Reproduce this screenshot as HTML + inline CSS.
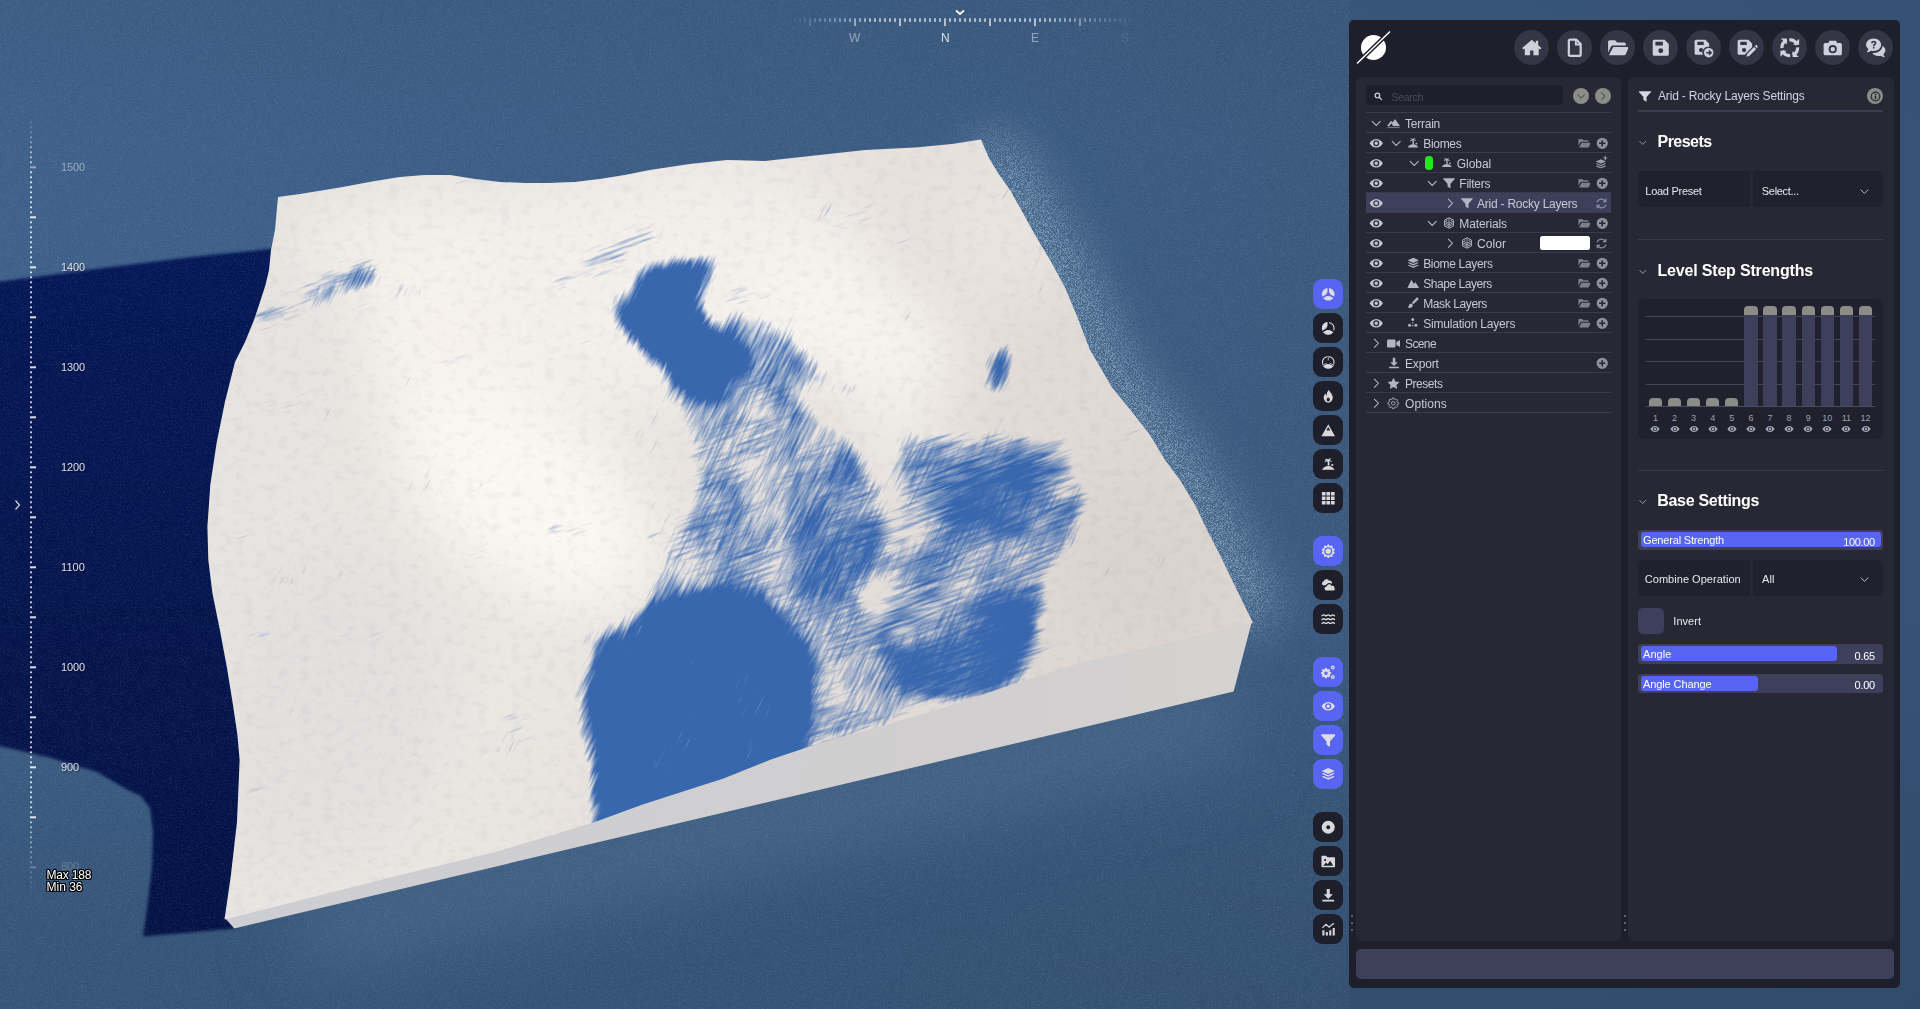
<!DOCTYPE html>
<html><head><meta charset="utf-8"><title>Terrain</title>
<style>
html,body{margin:0;padding:0;}
body{width:1920px;height:1009px;overflow:hidden;position:relative;background:#3e5f8c;font-family:"Liberation Sans",sans-serif;}
#scene{position:absolute;left:0;top:0;}
#ui{position:absolute;left:0;top:0;width:1920px;height:1009px;}
#ui svg{overflow:visible}
</style></head><body>
<svg id="scene" width="1920" height="1009" viewBox="0 0 1920 1009">
<defs>
<linearGradient id="bg1" x1="0" y1="0" x2="1" y2="0">
<stop offset="0" stop-color="#3e5f88"/><stop offset="0.35" stop-color="#3c5c84"/><stop offset="0.7" stop-color="#3a587c"/><stop offset="1" stop-color="#365276"/>
</linearGradient>
<linearGradient id="bgv" x1="0" y1="0" x2="0" y2="1">
<stop offset="0" stop-color="#2a4560" stop-opacity="0.12"/><stop offset="0.15" stop-color="#2a4560" stop-opacity="0"/><stop offset="0.6" stop-color="#2a4560" stop-opacity="0"/><stop offset="0.9" stop-color="#2a4560" stop-opacity="0.4"/><stop offset="1" stop-color="#2a4560" stop-opacity="0.45"/>
</linearGradient>
<linearGradient id="shg" x1="0" y1="0" x2="0" y2="1"><stop offset="0" stop-color="#041654"/><stop offset="1" stop-color="#031143"/></linearGradient>
<linearGradient id="topg" x1="0" y1="0" x2="1" y2="0.3"><stop offset="0" stop-color="#e6e2df"/><stop offset="0.45" stop-color="#ebe7e3"/><stop offset="1" stop-color="#ddd6d2"/></linearGradient>
<linearGradient id="sideg" x1="0" y1="0" x2="1" y2="0"><stop offset="0" stop-color="#cdced3"/><stop offset="0.7" stop-color="#d0cecf"/><stop offset="1" stop-color="#d5d2d1"/></linearGradient>
<clipPath id="topclip"><polygon points="278,197 300,194 340,187.5 375,181 400,177 425,175 450,175 475,179 500,182 525,183 550,183 575,182 600,179 625,175 650,170 690,164 727,160 765,161 815,155.5 865,150 915,147.5 952,144 981,139.5 988.75,157.5 997.5,172.5 1010,190 1022.5,212.5 1035,235 1050,260 1065,287.5 1077.5,317.5 1090,350 1097.5,362.5 1112,387.5 1132,412 1150,435 1165,460 1180,480 1195,505 1207,530 1220,555 1232,580 1253,623 1151.6,647 1085.6,661.3 1020,682 949,706 884,725.6 820,743 771,759.5 723,778.8 642,804.7 593.7,822.4 497,851.5 400,875 224.5,919.6 230.8,876 237,822 239.7,760 237.4,734.5 232.4,701 227,668 220,630.5 212.4,593 208.3,560 207.4,526.5 210.3,485 216.6,443 225,401.6 235,362 245,342 254,320 260,302 265.5,285 269,270 271,250 275,230"/></clipPath>
<filter id="b2" color-interpolation-filters="sRGB" filterUnits="userSpaceOnUse" x="-50" y="200" width="500" height="800"><feGaussianBlur stdDeviation="1.6"/></filter>
<filter id="b20" color-interpolation-filters="sRGB" filterUnits="userSpaceOnUse" x="0" y="0" width="1920" height="1009"><feGaussianBlur stdDeviation="30"/></filter>
<filter id="b40" color-interpolation-filters="sRGB" filterUnits="userSpaceOnUse" x="0" y="0" width="1920" height="1009"><feGaussianBlur stdDeviation="38"/></filter>
<filter id="halo" filterUnits="userSpaceOnUse" x="900" y="60" width="480" height="720" color-interpolation-filters="sRGB">
<feGaussianBlur in="SourceAlpha" stdDeviation="24" result="a"/>
<feTurbulence type="fractalNoise" baseFrequency="1.4" numOctaves="2" seed="3" result="t"/>
<feColorMatrix in="t" type="matrix" values="0 0 0 0 0  0 0 0 0 0  0 0 0 0 0  4 0 0 0 -1.7" result="n"/>
<feComposite in="a" in2="n" operator="arithmetic" k1="0.85" k2="0.16" k3="0" k4="0" result="m"/>
<feFlood flood-color="#9fc0d4" result="f"/>
<feComposite in="f" in2="m" operator="in"/>
</filter>
<filter id="relief" filterUnits="userSpaceOnUse" x="200" y="130" width="1060" height="800" color-interpolation-filters="sRGB">
<feTurbulence type="fractalNoise" baseFrequency="0.09 0.13" numOctaves="3" seed="17" result="t"/>
<feColorMatrix in="t" type="matrix" values="0 0 0 0 0.5  0 0 0 0 0.53  0 0 0 0 0.66  2.4 0 0 0 -1.22"/>
</filter>
<filter id="grain" filterUnits="userSpaceOnUse" x="0" y="0" width="1350" height="1009" color-interpolation-filters="sRGB">
<feTurbulence type="fractalNoise" baseFrequency="1.3" numOctaves="2" seed="5" result="t"/>
<feColorMatrix in="t" type="matrix" values="0 0 0 0 0.75  0 0 0 0 0.85  0 0 0 0 1  0 3 0 0 -1.35"/>
</filter>
<filter id="streak" filterUnits="userSpaceOnUse" x="-200" y="-200" width="1900" height="1500" color-interpolation-filters="sRGB">
<feGaussianBlur in="SourceAlpha" stdDeviation="8" result="a"/>
<feTurbulence type="fractalNoise" baseFrequency="0.035 0.4" numOctaves="3" seed="7" result="t"/>
<feColorMatrix in="t" type="matrix" values="0 0 0 0 0  0 0 0 0 0  0 0 0 0 0  1 0 0 0 0" result="n"/>
<feTurbulence type="fractalNoise" baseFrequency="0.014 0.022" numOctaves="3" seed="11" result="t2"/>
<feColorMatrix in="t2" type="matrix" values="0 0 0 0 0  0 0 0 0 0  0 0 0 0 0  0 1 0 0 0" result="n2"/>
<feComposite in="n" in2="n2" operator="arithmetic" k1="0" k2="0.55" k3="0.7" k4="-0.125" result="nn"/>
<feComposite in="a" in2="nn" operator="arithmetic" k1="0" k2="1" k3="1.04" k4="-0.52" result="m"/>
<feComponentTransfer in="m" result="m2"><feFuncA type="linear" slope="2.4" intercept="-0.7"/></feComponentTransfer>
<feFlood flood-color="#3967ae" result="f"/>
<feComposite in="f" in2="m2" operator="in"/>
</filter>
<filter id="streak2" filterUnits="userSpaceOnUse" x="-200" y="-200" width="1900" height="1500" color-interpolation-filters="sRGB">
<feGaussianBlur in="SourceAlpha" stdDeviation="8" result="a"/>
<feTurbulence type="fractalNoise" baseFrequency="0.03 0.36" numOctaves="3" seed="23" result="t"/>
<feColorMatrix in="t" type="matrix" values="0 0 0 0 0  0 0 0 0 0  0 0 0 0 0  1 0 0 0 0" result="n"/>
<feTurbulence type="fractalNoise" baseFrequency="0.012 0.02" numOctaves="3" seed="31" result="t2"/>
<feColorMatrix in="t2" type="matrix" values="0 0 0 0 0  0 0 0 0 0  0 0 0 0 0  0 1 0 0 0" result="n2"/>
<feComposite in="n" in2="n2" operator="arithmetic" k1="0" k2="0.55" k3="0.7" k4="-0.125" result="nn"/>
<feComposite in="a" in2="nn" operator="arithmetic" k1="0" k2="1" k3="1.04" k4="-0.52" result="m"/>
<feComponentTransfer in="m" result="m2"><feFuncA type="linear" slope="2.4" intercept="-0.7"/></feComponentTransfer>
<feFlood flood-color="#3967ae" result="f"/>
<feComposite in="f" in2="m2" operator="in"/>
</filter>
</defs>
<rect width="1920" height="1009" fill="url(#bg1)"/>
<rect width="1920" height="1009" fill="url(#bgv)"/>
<path d="M300,935 L1240,712" stroke="#4d6c8c" stroke-opacity="0.75" stroke-width="70" fill="none" filter="url(#b40)"/>
<polygon points="-10,283 100,268.5 200,256 280,248 400,500 300,900 234.3,928.5 143,936.5 148,902 152,867 153,831 150,808 141,796 126,789 97,772 48,757 -10,744" fill="url(#shg)" filter="url(#b2)"/>
<g filter="url(#halo)"><polyline points="981,139.5 988.75,157.5 997.5,172.5 1010,190 1022.5,212.5 1035,235 1050,260 1065,287.5 1077.5,317.5 1090,350 1097.5,362.5 1112,387.5 1132,412 1150,435 1165,460 1180,480 1195,505 1207,530 1220,555 1232,580 1253,623" fill="none" stroke="#000" stroke-width="44" transform="translate(6,2)"/></g>
<rect width="1350" height="1009" filter="url(#grain)" opacity="0.1"/>
<polygon points="1252,621 1151.6,645 1085.6,659.3 1020,680 949,704 884,723.6 820,741 771,757.5 723,776.8 642,802.7 593.7,820.4 497,849.5 400,873 224.5,917.6 234.3,928.5 1233.6,691.6" fill="url(#sideg)"/>
<polygon points="278,197 300,194 340,187.5 375,181 400,177 425,175 450,175 475,179 500,182 525,183 550,183 575,182 600,179 625,175 650,170 690,164 727,160 765,161 815,155.5 865,150 915,147.5 952,144 981,139.5 988.75,157.5 997.5,172.5 1010,190 1022.5,212.5 1035,235 1050,260 1065,287.5 1077.5,317.5 1090,350 1097.5,362.5 1112,387.5 1132,412 1150,435 1165,460 1180,480 1195,505 1207,530 1220,555 1232,580 1253,623 1151.6,647 1085.6,661.3 1020,682 949,706 884,725.6 820,743 771,759.5 723,778.8 642,804.7 593.7,822.4 497,851.5 400,875 224.5,919.6 230.8,876 237,822 239.7,760 237.4,734.5 232.4,701 227,668 220,630.5 212.4,593 208.3,560 207.4,526.5 210.3,485 216.6,443 225,401.6 235,362 245,342 254,320 260,302 265.5,285 269,270 271,250 275,230" fill="url(#topg)"/>
<g clip-path="url(#topclip)"><g filter="url(#b20)">
<ellipse cx="525" cy="495" rx="150" ry="85" fill="#fefbf4" fill-opacity="0.8" transform="rotate(38 525 495)"/>
<ellipse cx="440" cy="370" rx="70" ry="110" fill="#fbf8f1" fill-opacity="0.6" transform="rotate(-25 440 370)"/>
<ellipse cx="400" cy="240" rx="110" ry="45" fill="#faf7f1" fill-opacity="0.55" transform="rotate(-8 400 240)"/>
<ellipse cx="620" cy="290" rx="260" ry="110" fill="#f5f2ed" fill-opacity="0.75" transform="rotate(-8 620 290)"/>
<ellipse cx="850" cy="330" rx="115" ry="60" fill="#f8f5f0" fill-opacity="0.9" transform="rotate(25 850 330)"/>
<ellipse cx="900" cy="440" rx="50" ry="35" fill="#f4f1ec" fill-opacity="0.7" transform="rotate(25 900 440)"/>
<ellipse cx="1140" cy="570" rx="90" ry="70" fill="#d8d0cc" fill-opacity="0.5" transform="rotate(50 1140 570)"/>
<ellipse cx="1000" cy="235" rx="70" ry="75" fill="#ede8e5" fill-opacity="0.6"/>
<ellipse cx="330" cy="720" rx="110" ry="160" fill="#dcd9dc" fill-opacity="0.45" transform="rotate(10 330 720)"/>
<ellipse cx="400" cy="840" rx="150" ry="40" fill="#e9e5e2" fill-opacity="0.4" transform="rotate(-14 400 840)"/>
</g></g>
<g clip-path="url(#topclip)"><rect x="200" y="130" width="1060" height="800" filter="url(#relief)" opacity="0.1"/></g>
<g clip-path="url(#topclip)"><g transform="rotate(-20 700 500)"><g filter="url(#streak2)"><g transform="rotate(20 700 500)">
<polygon points="890,440 940,430 1000,432 1060,450 1085,480 1075,530 1050,570 1040,615 1025,675 950,703 900,690 880,640 890,560 900,500" fill="#000" fill-opacity="0.46" />
<polygon points="663,374 767,360 800,400 850,440 884,490 890,560 860,600 800,600 760,600 700,595 651,600 681,527 694,478 681,404" fill="#000" fill-opacity="0.29" />
<polygon points="775,600 860,600 900,650 1030,600 1040,620 1020,680 950,705 885,725 820,743 775,757 790,700" fill="#000" fill-opacity="0.37" />
<ellipse cx="1000" cy="505" rx="60" ry="38" fill="#000" fill-opacity="0.35" transform="rotate(-20 1000 505)"/>
<ellipse cx="840" cy="545" rx="50" ry="48" fill="#000" fill-opacity="0.35"/>
<ellipse cx="960" cy="640" rx="70" ry="40" fill="#000" fill-opacity="0.12" transform="rotate(-20 960 640)"/>
<path d="M255,320 L372,262" stroke="#000" stroke-opacity="0.45" stroke-width="18" fill="none"/>
<path d="M550,282 L665,228" stroke="#000" stroke-opacity="0.48" stroke-width="16" fill="none"/>
</g></g></g></g>
<g clip-path="url(#topclip)"><g transform="rotate(-64 700 500)"><g filter="url(#streak)"><g transform="rotate(64 700 500)">
<polygon points="614,312 632,292 642,270 672,262 705,257 718,264 708,285 700,303 715,322 735,340 752,357 755,368 733,375 728,392 708,400 680,392 667,370 647,362 642,347 627,330" fill="#000" fill-opacity="1" />
<polygon points="663,374 767,360 800,400 850,440 884,490 890,560 860,600 800,600 760,600 700,595 651,600 681,527 694,478 681,404" fill="#000" fill-opacity="0.46" />
<polygon points="890,440 940,430 1000,432 1060,450 1085,480 1075,530 1050,570 1040,615 1025,675 950,703 900,690 880,640 890,560 900,500" fill="#000" fill-opacity="0.33" />
<polygon points="775,600 860,600 900,650 1030,600 1040,620 1020,680 950,705 885,725 820,743 775,757 790,700" fill="#000" fill-opacity="0.39" />
<polygon points="720,300 790,340 860,385 850,402 770,378 730,350" fill="#000" fill-opacity="0.45" />
<ellipse cx="840" cy="545" rx="45" ry="45" fill="#000" fill-opacity="0.3"/>
<ellipse cx="1000" cy="500" rx="50" ry="30" fill="#000" fill-opacity="0.25" transform="rotate(-20 1000 500)"/>
<polygon points="600,640 650,605 700,590 760,596 800,630 815,690 805,765 723,800 642,826 596,840 588,760 585,700" fill="#000" fill-opacity="0.95" />
<ellipse cx="1001" cy="368" rx="11" ry="27" fill="#000" fill-opacity="0.95" transform="rotate(14 1001 368)"/>
<ellipse cx="361" cy="277" rx="9" ry="15" fill="#000" fill-opacity="0.95" transform="rotate(42 361 277)"/>
<path d="M300,305 L350,285" stroke="#000" stroke-opacity="0.5" stroke-width="12" fill="none"/>
</g></g></g></g>
</svg>
<div id="ui">

<svg width="0" height="0" style="position:absolute"><defs>
<symbol id="i-eye" viewBox="0 0 16 16"><path fill-rule="evenodd" d="M8 3.2C4.4 3.2 1.7 5.7.7 8c1 2.3 3.7 4.8 7.3 4.8s6.300-2.500 7.300-4.800C14.300 5.700 11.600 3.200 8 3.200zM8 11.300A3.300 3.300 0 1 1 8 4.700a3.300 3.300 0 0 1 0 6.600zM8 9.900A1.900 1.900 0 1 0 8 6.100a1.900 1.900 0 0 0 0 3.800z"/></symbol>
<symbol id="i-cd" viewBox="0 0 16 16"><path d="M2.500 5.200L8 10.800l5.500-5.600" fill="none" stroke="currentColor" stroke-width="1.300"/></symbol>
<symbol id="i-cr" viewBox="0 0 16 16"><path d="M5.200 2.500L10.800 8l-5.600 5.500" fill="none" stroke="currentColor" stroke-width="1.300"/></symbol>
<symbol id="i-mount" viewBox="0 0 16 16"><path d="M9.800 2.500L16 11H7.600L5.300 7.800 3 11H0l5-6.500 1.700 2.200z"/><path d="M0.500 12h15v1.600h-15z" opacity="0.550"/></symbol>
<symbol id="i-island" viewBox="0 0 16 16"><path d="M1 14c1.500-2.800 4-4.200 7-4.200s5.500 1.400 7 4.200zM7.300 9.500c.3-1.800.2-3.400-.3-4.800C5.800 4.600 4.800 5.200 4 6.300 3.800 4.800 4.800 3.600 6.300 3.300 5.600 2.800 4.800 2.600 3.800 2.800 4.800 1.600 6.600 1.500 7.800 2.800 8.600 1.600 10.300 1.300 11.600 2.200c-1 .1-1.800.5-2.400 1.100 1.500 0 2.700 1 2.900 2.600-.9-.9-2-1.300-3.300-1.100.6 1.400.8 3 .5 4.700z"/><circle cx="12.500" cy="8.800" r="1.200"/></symbol>
<symbol id="i-filter" viewBox="0 0 16 16"><path d="M.8 1.500h14.400c.6 0 .9.700.5 1.200L10 9v5.300c0 .5-.6.800-1 .5l-2.600-1.900c-.3-.2-.4-.5-.4-.8V9L.3 2.700C-.1 2.200.200 1.500.8 1.500z"/></symbol>
<symbol id="i-mat" viewBox="0 0 16 16"><path d="M8 1l6 3v8l-6 3-6-3V4z" fill="none" stroke="currentColor" stroke-width="1.200"/><path d="M2.500 5.500L8 8.200l5.500-2.700M2.500 7.700L8 10.400l5.500-2.700M2.500 9.900L8 12.600l5.500-2.700M8 1.500v13M5 3v2.500M11 3v2.500" fill="none" stroke="currentColor" stroke-width="1.100"/></symbol>
<symbol id="i-layers" viewBox="0 0 16 16"><path d="M8 1L.8 4.300 8 7.600l7.200-3.300zM2.700 6.600L.8 7.500 8 10.800l7.200-3.300-1.900-.9L8 9zM2.700 9.800l-1.900.9L8 14l7.200-3.300-1.900-.9L8 12.200z"/></symbol>
<symbol id="i-shape" viewBox="0 0 16 16"><path d="M5.500 3.500L9 9l1.800-2.500L15.500 14H.5z"/></symbol>
<symbol id="i-brush" viewBox="0 0 16 16"><path d="M14.800 1.200c-.7-.7-1.800-.6-2.500.1L6.500 7.600l2 2 6.300-5.900c.7-.7.700-1.800 0-2.500zM5.600 8.500C4 8.600 3 9.500 2.700 11c-.2 1.200-.8 2.200-1.900 2.800 2.300 1.200 5.400.9 6.600-1 .6-1 .6-2 .1-2.800z"/></symbol>
<symbol id="i-sim" viewBox="0 0 16 16"><circle cx="8" cy="3.500" r="2.100"/><circle cx="3.600" cy="11.500" r="2.100"/><circle cx="12.400" cy="11.500" r="2.100"/><circle cx="8" cy="8.300" r="1"/><circle cx="8" cy="12" r="1"/></symbol>
<symbol id="i-video" viewBox="0 0 16 16"><rect x="0" y="3" width="10.500" height="10" rx="1.600"/><path d="M11.500 6.500L15 4c.4-.3 1 0 1 .5v7c0 .5-.6.800-1 .5l-3.500-2.500z"/></symbol>
<symbol id="i-dl" viewBox="0 0 16 16"><path d="M6.300 1h3.400v6H13l-5 5-5-5h3.300zM1.500 13h13v2h-13z"/></symbol>
<symbol id="i-star" viewBox="0 0 16 16"><path d="M8 .8l2.200 4.700 5.100.7-3.700 3.600.9 5.100L8 12.400l-4.500 2.500.9-5.100L.7 6.200l5.100-.7z"/></symbol>
<symbol id="i-gear" viewBox="0 0 16 16"><circle cx="8" cy="8" r="2.300" fill="none" stroke="currentColor" stroke-width="1.100"/><path d="M8 1.200l1 .1.400 1.700 1.200.5 1.500-.9 1.400 1.400-.9 1.500.5 1.200 1.700.4v2l-1.700.4-.5 1.200.9 1.500-1.400 1.400-1.500-.9-1.200.5-.4 1.700H7l-.4-1.700-1.200-.5-1.500.9-1.400-1.400.9-1.500-.5-1.200L1.200 9V7l1.700-.4.500-1.200-.9-1.500 1.400-1.400 1.500.9 1.200-.5L7 1.200z" fill="none" stroke="currentColor" stroke-width="1.100" stroke-linejoin="round"/></symbol>
<symbol id="i-folder" viewBox="0 0 16 16"><path d="M1.500 2.500h4l1.500 1.500h5.500c.6 0 1 .4 1 1v1H4.300c-.7 0-1.300.4-1.600 1L.5 11.500v-8c0-.6.400-1 1-1zM4.500 7.200h10.800c.5 0 .8.500.6 1l-2 4.600c-.2.400-.6.700-1 .7H1.500z"/></symbol>
<symbol id="i-plus" viewBox="0 0 16 16"><path fill-rule="evenodd" d="M8 .8a7.200 7.200 0 1 0 0 14.400A7.200 7.200 0 0 0 8 .8zM7 4h2v3h3v2H9v3H7V9H4V7h3z"/></symbol>
<symbol id="i-sync" viewBox="0 0 16 16"><path d="M13.300 2.300V5.800H9.800M2.700 13.700V10.200H6.200" fill="none" stroke="currentColor" stroke-width="1.600"/><path d="M12.800 5.300A5.600 5.600 0 0 0 2.600 6.600M3.200 10.700a5.600 5.600 0 0 0 10.200-1.300" fill="none" stroke="currentColor" stroke-width="1.600"/></symbol>
<symbol id="i-layerplus" viewBox="0 0 16 16"><path d="M7.500 4L.8 7l6.700 3 6.700-3zM2.600 9.200L.8 10l6.700 3 6.700-3-1.800-.8-4.900 2.200zM2.600 12.200L.8 13l6.700 3 6.700-3-1.800-.8-4.900 2.200zM12.500 0h1.400v1.800h1.800v1.400h-1.800V5h-1.400V3.200h-1.800V1.800h1.800z"/></symbol>
<symbol id="i-search" viewBox="0 0 16 16"><circle cx="6.500" cy="6.500" r="4.300" fill="none" stroke="currentColor" stroke-width="2.200"/><path d="M9.800 9.800l4.500 4.500" stroke="currentColor" stroke-width="2.400" stroke-linecap="round"/></symbol>
<symbol id="i-info" viewBox="0 0 16 16"><circle cx="8" cy="8" r="4.600" fill="none" stroke="currentColor" stroke-width="1.300"/><rect x="7.200" y="7" width="1.600" height="3.800"/><rect x="7.200" y="5" width="1.600" height="1.400"/></symbol>
<!-- top bar -->
<symbol id="t-home" viewBox="0 0 20 20"><path d="M10 2.500L1 10.300l1.200 1.400L3.500 10.600V17h5v-4.500h3V17h5v-6.400l1.300 1.100L19 10.300l-3-2.600V3.500h-2.300v2.200z"/></symbol>
<symbol id="t-file" viewBox="0 0 20 20"><path d="M5.500 2.500h6l4 4v10a1 1 0 0 1-1 1h-9a1 1 0 0 1-1-1v-13a1 1 0 0 1 1-1z" fill="none" stroke="currentColor" stroke-width="2.100" stroke-linejoin="round"/><path d="M11 2.500v4.500h4.500" fill="none" stroke="currentColor" stroke-width="1.700"/></symbol>
<symbol id="t-folder" viewBox="0 0 20 20"><path d="M2.500 3h5l2 2h6.500c.8 0 1.500.7 1.500 1.500V8H5.600c-.9 0-1.700.5-2.100 1.300L1 14.500v-10C1 3.700 1.700 3 2.500 3zM5.800 9.300H19c.6 0 1 .6.800 1.200l-2.400 5.500c-.3.600-.8 1-1.500 1H1.800z"/></symbol>
<symbol id="t-save" viewBox="0 0 20 20"><path fill-rule="evenodd" d="M4 2.500h9.500L17.500 6.500V16c0 .8-.7 1.500-1.500 1.500H4c-.8 0-1.500-.7-1.500-1.500V4c0-.8.700-1.500 1.500-1.500zM5 4.500v3.500h7V4.500zM10 10.500a2.300 2.300 0 1 0 0 4.600 2.300 2.300 0 0 0 0-4.600z"/></symbol>
<symbol id="t-saveplus" viewBox="0 0 20 20"><path fill-rule="evenodd" d="M3 2.500h8.500L15 6v3.200a5.200 5.200 0 0 0-5.800 7.300H3c-.8 0-1.500-.7-1.500-1.500V4c0-.8.700-1.500 1.500-1.500zM4 4.500v3h6v-3zM7.500 10.200a2 2 0 1 0 0 4 2 2 0 0 0 0-4z"/><circle cx="14.600" cy="14.600" r="4.400"/><path d="M12.300 14.600h4.300M14.800 12.500l2.100 2.100-2.100 2.100" fill="none" stroke="var(--bg)" stroke-width="1.400"/></symbol>
<symbol id="t-saveedit" viewBox="0 0 20 20"><path fill-rule="evenodd" d="M3 2.500h8.500L15 6v3.500l-6.300 6.300-.2 .7H3c-.8 0-1.500-.7-1.500-1.500V4c0-.8.700-1.500 1.500-1.500zM4 4.500v3h6v-3zM7.500 10.200a2 2 0 1 0 0 4 2 2 0 0 0 0-4z"/><path d="M16.800 9.200l2 2-6.500 6.500-2.600.6.600-2.600zM17.500 8.500l.8-.8c.4-.4 1-.4 1.400 0l.6.600c.4.400.4 1 0 1.400l-.8.800z"/></symbol>
<symbol id="t-sync" viewBox="0 0 20 20"><g><path d="M9.62 2.71A7.3 7.3 0 0 1 16.77 7.27" fill="none" stroke="currentColor" stroke-width="3"/><path d="M18.7 1.6V7.300H13z"/></g><g transform="rotate(90 10 10)"><path d="M9.62 2.71A7.3 7.3 0 0 1 16.77 7.27" fill="none" stroke="currentColor" stroke-width="3"/><path d="M18.7 1.6V7.300H13z"/></g><g transform="rotate(180 10 10)"><path d="M9.62 2.71A7.3 7.3 0 0 1 16.77 7.27" fill="none" stroke="currentColor" stroke-width="3"/><path d="M18.7 1.6V7.300H13z"/></g><g transform="rotate(270 10 10)"><path d="M9.62 2.71A7.3 7.3 0 0 1 16.77 7.27" fill="none" stroke="currentColor" stroke-width="3"/><path d="M18.7 1.6V7.300H13z"/></g></symbol>
<symbol id="t-camera" viewBox="0 0 20 20"><path fill-rule="evenodd" d="M7 3.500h6l1.200 2H17c.8 0 1.500.7 1.500 1.500v8.500c0 .8-.7 1.500-1.500 1.500H3c-.8 0-1.500-.7-1.500-1.500V7c0-.8.700-1.500 1.500-1.500h2.800zM10 7.500a3.800 3.800 0 1 0 0 7.600 3.800 3.800 0 0 0 0-7.600zM10 9.200a2.100 2.100 0 1 1 0 4.200 2.100 2.100 0 0 1 0-4.200z"/></symbol>
<symbol id="t-chat" viewBox="0 0 20 20"><path fill-rule="evenodd" d="M8 1.500c3.900 0 7 2.600 7 5.800s-3.100 5.800-7 5.800c-.8 0-1.600-.1-2.300-.3-1 .8-2.400 1.400-4.200 1.400 1-1 1.500-2 1.600-3C1.800 10.200 1 8.800 1 7.300c0-3.200 3.100-5.800 7-5.800zM7.300 9.300h1.500v1.500H7.300zM5.700 5.700h1.500c0-.6.400-.9.900-.9s.9.300.9.800c0 .9-1.700 1-1.700 2.900h1.500c0-1.200 1.800-1.400 1.800-3 0-1.300-1.100-2.100-2.500-2.100s-2.400.9-2.400 2.300z"/><path d="M16.300 8.200c1.600 1 2.700 2.500 2.700 4.200 0 1.400-.7 2.600-1.900 3.600.1.900.6 1.800 1.500 2.700-1.700 0-3-.5-4-1.300-.6.100-1.300.2-2 .2-2.600 0-4.800-1.100-5.900-2.800.4 0 .9.100 1.300.1 4.600 0 8.300-3 8.300-6.700z"/></symbol>
<!-- side bar -->
<symbol id="s-pie1" viewBox="0 0 16 16"><circle cx="8" cy="8" r="7"/><path d="M8 8V0.500M8 8l6.800 3.900M8 8l-6.800 3.900" stroke="var(--bg)" stroke-width="1.700" fill="none"/><circle cx="8" cy="8" r="2.100" fill="var(--bg)"/></symbol>
<symbol id="s-pie2" viewBox="0 0 16 16"><circle cx="8" cy="8" r="6.400" fill="none" stroke="currentColor" stroke-width="1.200"/><path d="M8 8L14.062 11.500A7 7 0 0 1 1.938 11.500ZM8 8L1.938 11.500A7 7 0 0 1 8 1Z"/><path d="M8 8V0.500M8 8l6.800 3.900M8 8l-6.800 3.900" stroke="var(--bg)" stroke-width="1.700" fill="none"/><circle cx="8" cy="8" r="2.100" fill="var(--bg)"/></symbol>
<symbol id="s-pie3" viewBox="0 0 16 16"><circle cx="8" cy="8" r="6.400" fill="none" stroke="currentColor" stroke-width="1.200"/><path d="M8 8L14.062 11.500A7 7 0 0 1 1.938 11.500Z"/><path d="M8 8V1.500M8 8l5.800 3.300M8 8l-5.800 3.300" stroke="var(--bg)" stroke-width="1.700" fill="none"/><path d="M8 7V1.500M9 8.500l4.800 2.800M7 8.500l-4.800 2.800" stroke="currentColor" stroke-width="0.900" fill="none"/><circle cx="8" cy="8" r="2.100" fill="var(--bg)"/></symbol>
<symbol id="s-fire" viewBox="0 0 16 16"><path fill-rule="evenodd" d="M8.800 .8c.3 2.400 4.200 4.300 4.200 8.700 0 3.200-2.300 5.700-5 5.700S3 12.700 3 9.500c0-2 .9-3.500 2-4.800 0 1.300.5 2.200 1.400 2.600C6 5 7 2.500 8.800.8zM8.200 8.500C7.200 9.800 6.200 10.500 6.200 11.800c0 1.100.8 1.900 1.800 1.900s1.800-.8 1.800-1.900c0-.8-.5-1.600-.9-2.100-.2.400-.5.700-.8.800.2-.8.200-1.400.1-2z"/></symbol>
<symbol id="s-mount" viewBox="0 0 16 16"><path d="M8 1.500L15.500 14.500H.5zM8 4.500L6.200 7.700l1 .9L8 7.700l1.300 1.100.6-1z" fill-rule="evenodd"/></symbol>
<symbol id="s-grid" viewBox="0 0 16 16"><path d="M1 1h4v4H1zM6 1h4v4H6zM11 1h4v4h-4zM1 6h4v4H1zM6 6h4v4H6zM11 6h4v4h-4zM1 11h4v4H1zM6 11h4v4H6zM11 11h4v4h-4z"/></symbol>
<symbol id="s-sun" viewBox="0 0 16 16"><path fill-rule="evenodd" d="M8 0l1.700 2.300 2.800-.6.300 2.800 2.600 1.200L14 8l1.400 2.300-2.600 1.200-.3 2.800-2.800-.6L8 16l-1.700-2.300-2.800.6-.3-2.800L.6 10.300 2 8 .6 5.700l2.600-1.200.3-2.800 2.800.6zM8 3.600a4.400 4.400 0 1 0 0 8.800 4.400 4.400 0 0 0 0-8.800zM8 5a3 3 0 1 1 0 6 3 3 0 0 1 0-6z"/></symbol>
<symbol id="s-cloud" viewBox="0 0 16 16"><path d="M2.800 8.200A2.300 2.300 0 0 1 3 3.700 3.200 3.200 0 0 1 8.800 3a2.400 2.400 0 0 1 3.300 2.300c0 .3 0 .6-.1.800z"/><path d="M6.200 14.300a2.700 2.700 0 0 1-.4-5.400A3.300 3.300 0 0 1 12 8a2.600 2.600 0 0 1 3.500 2.500c0 .3 0 .5-.1.700a2 2 0 0 1-1.200 3.100z" stroke="var(--bg)" stroke-width="1.200"/></symbol>
<symbol id="s-water" viewBox="0 0 16 16"><path d="M.5 4.200c1.300 0 1.300-1 2.500-1s1.300 1 2.500 1 1.300-1 2.500-1 1.300 1 2.500 1 1.300-1 2.500-1 1.300 1 2.500 1M.5 8.400c1.300 0 1.300-1 2.500-1s1.300 1 2.500 1 1.300-1 2.500-1 1.300 1 2.500 1 1.300-1 2.500-1 1.300 1 2.500 1M.5 12.600c1.300 0 1.300-1 2.500-1s1.300 1 2.500 1 1.300-1 2.500-1 1.300 1 2.500 1 1.300-1 2.500-1 1.300 1 2.500 1" fill="none" stroke="currentColor" stroke-width="1.500"/></symbol>
<symbol id="s-cogs" viewBox="0 0 16 16"><path fill-rule="evenodd" d="M5.500 3.200l1 .1.300 1.300.9.400 1.200-.7 1.300 1.300-.7 1.200.4.900 1.300.3v1.900l-1.300.3-.4.900.7 1.200-1.300 1.300-1.200-.7-.9.400-.3 1.300H4.600l-.3-1.300-.9-.4-1.200.7L.9 12.300l.7-1.200-.4-.9L-.1 9.900V8l1.300-.3.400-.9-.7-1.200L2.200 4.300l1.200.7.900-.4.300-1.300zM5.500 7.100a1.900 1.900 0 1 0 0 3.800 1.900 1.900 0 0 0 0-3.800z"/><path fill-rule="evenodd" d="M13 .6a2.200 2.200 0 1 0 0 4.400 2.200 2.200 0 0 0 0-4.400zM13 2a.8.800 0 1 1 0 1.600.8.800 0 0 1 0-1.600zM13 11a2.200 2.200 0 1 0 0 4.400 2.200 2.200 0 0 0 0-4.400zM13 12.400a.8.800 0 1 1 0 1.600.8.800 0 0 1 0-1.600z"/></symbol>
<symbol id="s-disc" viewBox="0 0 16 16"><path fill-rule="evenodd" d="M8 .8a7.200 7.200 0 1 0 0 14.400A7.200 7.200 0 0 0 8 .8zM8 5.800a2.200 2.200 0 1 1 0 4.400 2.200 2.200 0 0 1 0-4.400z"/></symbol>
<symbol id="s-img" viewBox="0 0 16 16"><path fill-rule="evenodd" d="M1.500 2h4.200l1.500 1.700h7.300c.6 0 1 .4 1 1v8.800c0 .6-.4 1-1 1h-13c-.6 0-1-.4-1-1V3c0-.6.400-1 1-1zM4.500 5.500a1.200 1.200 0 1 0 0 2.400 1.200 1.200 0 0 0 0-2.400zM2.500 13l3-3.500 1.800 1.800L10.200 7.500 13.500 13z"/></symbol>
<symbol id="s-chart" viewBox="0 0 16 16"><path d="M1.500 9h2.300v6H1.500zM5.300 11h2.300v4H5.300zM9.100 9h2.300v6H9.100zM12.900 6.500h2.300V15h-2.300z"/><path d="M1.500 6.500L5.500 2.500l3.500 3.200 4-3.700 1.500.2" fill="none" stroke="currentColor" stroke-width="1.400"/></symbol>
</defs></svg>
<svg style="position:absolute;left:780px;top:0" width="360" height="50">
<rect x="9.2" y="18.300" width="1.600" height="3.6" fill="#fff" fill-opacity="0.04"/>
<rect x="14.2" y="18.300" width="1.600" height="3.6" fill="#fff" fill-opacity="0.08"/>
<rect x="19.2" y="18.300" width="1.600" height="3.6" fill="#fff" fill-opacity="0.12"/>
<rect x="24.2" y="18.300" width="1.600" height="3.6" fill="#fff" fill-opacity="0.17"/>
<rect x="29.2" y="18.300" width="1.600" height="7.7" fill="#fff" fill-opacity="0.21"/>
<rect x="34.2" y="18.300" width="1.600" height="3.6" fill="#fff" fill-opacity="0.25"/>
<rect x="39.2" y="18.300" width="1.600" height="3.6" fill="#fff" fill-opacity="0.29"/>
<rect x="44.2" y="18.300" width="1.600" height="3.6" fill="#fff" fill-opacity="0.33"/>
<rect x="49.2" y="18.300" width="1.600" height="3.6" fill="#fff" fill-opacity="0.38"/>
<rect x="54.2" y="18.300" width="1.600" height="3.6" fill="#fff" fill-opacity="0.42"/>
<rect x="59.2" y="18.300" width="1.600" height="3.6" fill="#fff" fill-opacity="0.46"/>
<rect x="64.2" y="18.300" width="1.600" height="3.6" fill="#fff" fill-opacity="0.50"/>
<rect x="69.2" y="18.300" width="1.600" height="3.6" fill="#fff" fill-opacity="0.54"/>
<rect x="74.2" y="18.300" width="1.600" height="7.7" fill="#fff" fill-opacity="0.58"/>
<rect x="79.2" y="18.300" width="1.600" height="3.6" fill="#fff" fill-opacity="0.62"/>
<rect x="84.2" y="18.300" width="1.600" height="3.6" fill="#fff" fill-opacity="0.67"/>
<rect x="89.2" y="18.300" width="1.600" height="3.6" fill="#fff" fill-opacity="0.71"/>
<rect x="94.2" y="18.300" width="1.600" height="3.6" fill="#fff" fill-opacity="0.75"/>
<rect x="99.2" y="18.300" width="1.600" height="3.6" fill="#fff" fill-opacity="0.75"/>
<rect x="104.2" y="18.300" width="1.600" height="3.6" fill="#fff" fill-opacity="0.75"/>
<rect x="109.2" y="18.300" width="1.600" height="3.6" fill="#fff" fill-opacity="0.75"/>
<rect x="114.2" y="18.300" width="1.600" height="3.6" fill="#fff" fill-opacity="0.75"/>
<rect x="119.2" y="18.300" width="1.600" height="7.7" fill="#fff" fill-opacity="0.75"/>
<rect x="124.2" y="18.300" width="1.600" height="3.6" fill="#fff" fill-opacity="0.75"/>
<rect x="129.2" y="18.300" width="1.600" height="3.6" fill="#fff" fill-opacity="0.75"/>
<rect x="134.2" y="18.300" width="1.600" height="3.6" fill="#fff" fill-opacity="0.75"/>
<rect x="139.2" y="18.300" width="1.600" height="3.6" fill="#fff" fill-opacity="0.75"/>
<rect x="144.2" y="18.300" width="1.600" height="3.6" fill="#fff" fill-opacity="0.75"/>
<rect x="149.2" y="18.300" width="1.600" height="3.6" fill="#fff" fill-opacity="0.75"/>
<rect x="154.2" y="18.300" width="1.600" height="3.6" fill="#fff" fill-opacity="0.75"/>
<rect x="159.2" y="18.300" width="1.600" height="3.6" fill="#fff" fill-opacity="0.75"/>
<rect x="164.2" y="18.300" width="1.600" height="7.7" fill="#fff" fill-opacity="0.75"/>
<rect x="169.2" y="18.300" width="1.600" height="3.6" fill="#fff" fill-opacity="0.75"/>
<rect x="174.2" y="18.300" width="1.600" height="3.6" fill="#fff" fill-opacity="0.75"/>
<rect x="179.2" y="18.300" width="1.600" height="3.6" fill="#fff" fill-opacity="0.75"/>
<rect x="184.2" y="18.300" width="1.600" height="3.6" fill="#fff" fill-opacity="0.75"/>
<rect x="189.2" y="18.300" width="1.600" height="3.6" fill="#fff" fill-opacity="0.75"/>
<rect x="194.2" y="18.300" width="1.600" height="3.6" fill="#fff" fill-opacity="0.75"/>
<rect x="199.2" y="18.300" width="1.600" height="3.6" fill="#fff" fill-opacity="0.75"/>
<rect x="204.2" y="18.300" width="1.600" height="3.6" fill="#fff" fill-opacity="0.75"/>
<rect x="209.2" y="18.300" width="1.600" height="7.7" fill="#fff" fill-opacity="0.75"/>
<rect x="214.2" y="18.300" width="1.600" height="3.6" fill="#fff" fill-opacity="0.75"/>
<rect x="219.2" y="18.300" width="1.600" height="3.6" fill="#fff" fill-opacity="0.75"/>
<rect x="224.2" y="18.300" width="1.600" height="3.6" fill="#fff" fill-opacity="0.75"/>
<rect x="229.2" y="18.300" width="1.600" height="3.6" fill="#fff" fill-opacity="0.75"/>
<rect x="234.2" y="18.300" width="1.600" height="3.6" fill="#fff" fill-opacity="0.75"/>
<rect x="239.2" y="18.300" width="1.600" height="3.6" fill="#fff" fill-opacity="0.75"/>
<rect x="244.2" y="18.300" width="1.600" height="3.6" fill="#fff" fill-opacity="0.75"/>
<rect x="249.2" y="18.300" width="1.600" height="3.6" fill="#fff" fill-opacity="0.75"/>
<rect x="254.2" y="18.300" width="1.600" height="7.7" fill="#fff" fill-opacity="0.75"/>
<rect x="259.2" y="18.300" width="1.600" height="3.6" fill="#fff" fill-opacity="0.75"/>
<rect x="264.2" y="18.300" width="1.600" height="3.6" fill="#fff" fill-opacity="0.75"/>
<rect x="269.2" y="18.300" width="1.600" height="3.6" fill="#fff" fill-opacity="0.71"/>
<rect x="274.2" y="18.300" width="1.600" height="3.6" fill="#fff" fill-opacity="0.67"/>
<rect x="279.2" y="18.300" width="1.600" height="3.6" fill="#fff" fill-opacity="0.62"/>
<rect x="284.2" y="18.300" width="1.600" height="3.6" fill="#fff" fill-opacity="0.58"/>
<rect x="289.2" y="18.300" width="1.600" height="3.6" fill="#fff" fill-opacity="0.54"/>
<rect x="294.2" y="18.300" width="1.600" height="3.6" fill="#fff" fill-opacity="0.50"/>
<rect x="299.2" y="18.300" width="1.600" height="7.7" fill="#fff" fill-opacity="0.46"/>
<rect x="304.2" y="18.300" width="1.600" height="3.6" fill="#fff" fill-opacity="0.42"/>
<rect x="309.2" y="18.300" width="1.600" height="3.6" fill="#fff" fill-opacity="0.38"/>
<rect x="314.2" y="18.300" width="1.600" height="3.6" fill="#fff" fill-opacity="0.33"/>
<rect x="319.2" y="18.300" width="1.600" height="3.6" fill="#fff" fill-opacity="0.29"/>
<rect x="324.2" y="18.300" width="1.600" height="3.6" fill="#fff" fill-opacity="0.25"/>
<rect x="329.2" y="18.300" width="1.600" height="3.6" fill="#fff" fill-opacity="0.21"/>
<rect x="334.2" y="18.300" width="1.600" height="3.6" fill="#fff" fill-opacity="0.17"/>
<rect x="339.2" y="18.300" width="1.600" height="3.6" fill="#fff" fill-opacity="0.12"/>
<rect x="344.2" y="18.300" width="1.600" height="7.7" fill="#fff" fill-opacity="0.08"/>
<rect x="349.2" y="18.300" width="1.600" height="3.6" fill="#fff" fill-opacity="0.04"/>
<path d="M176 10.500l4 3.500 4-3.500" fill="none" stroke="#fff" stroke-width="1.700"/>
</svg>
<span class="" style="position:absolute;top:30.3px;height:16px;line-height:16px;font-size:12px;color:rgba(255,255,255,0.45);white-space:nowrap;left:849.1px;">W</span>
<span class="" style="position:absolute;top:30.3px;height:16px;line-height:16px;font-size:12px;color:rgba(255,255,255,0.8);white-space:nowrap;left:941.1px;">N</span>
<span class="" style="position:absolute;top:30.3px;height:16px;line-height:16px;font-size:12px;color:rgba(255,255,255,0.45);white-space:nowrap;left:1031.0px;">E</span>
<span class="" style="position:absolute;top:30.3px;height:16px;line-height:16px;font-size:12px;color:rgba(255,255,255,0.1);white-space:nowrap;left:1121.0px;">S</span>
<svg style="position:absolute;left:20px;top:100px" width="30" height="810">
<rect x="10" y="21.4" width="2" height="1.8" fill="#fff" fill-opacity="0.14"/>
<rect x="10" y="26.4" width="2" height="1.8" fill="#fff" fill-opacity="0.21"/>
<rect x="10" y="31.4" width="2" height="1.8" fill="#fff" fill-opacity="0.28"/>
<rect x="10" y="36.4" width="2" height="1.8" fill="#fff" fill-opacity="0.35"/>
<rect x="10" y="41.4" width="2" height="1.8" fill="#fff" fill-opacity="0.42"/>
<rect x="10" y="46.4" width="2" height="1.8" fill="#fff" fill-opacity="0.49"/>
<rect x="10" y="51.4" width="2" height="1.8" fill="#fff" fill-opacity="0.56"/>
<rect x="10" y="56.4" width="2" height="1.8" fill="#fff" fill-opacity="0.62"/>
<rect x="10" y="61.4" width="2" height="1.8" fill="#fff" fill-opacity="0.69"/>
<rect x="10" y="71.4" width="2" height="1.8" fill="#fff" fill-opacity="0.80"/>
<rect x="10" y="76.4" width="2" height="1.8" fill="#fff" fill-opacity="0.80"/>
<rect x="10" y="81.4" width="2" height="1.8" fill="#fff" fill-opacity="0.80"/>
<rect x="10" y="86.4" width="2" height="1.8" fill="#fff" fill-opacity="0.80"/>
<rect x="10" y="91.4" width="2" height="1.8" fill="#fff" fill-opacity="0.80"/>
<rect x="10" y="96.4" width="2" height="1.8" fill="#fff" fill-opacity="0.80"/>
<rect x="10" y="101.4" width="2" height="1.8" fill="#fff" fill-opacity="0.80"/>
<rect x="10" y="106.4" width="2" height="1.8" fill="#fff" fill-opacity="0.80"/>
<rect x="10" y="111.4" width="2" height="1.8" fill="#fff" fill-opacity="0.80"/>
<rect x="10" y="121.4" width="2" height="1.8" fill="#fff" fill-opacity="0.80"/>
<rect x="10" y="126.4" width="2" height="1.8" fill="#fff" fill-opacity="0.80"/>
<rect x="10" y="131.4" width="2" height="1.8" fill="#fff" fill-opacity="0.80"/>
<rect x="10" y="136.4" width="2" height="1.8" fill="#fff" fill-opacity="0.80"/>
<rect x="10" y="141.4" width="2" height="1.8" fill="#fff" fill-opacity="0.80"/>
<rect x="10" y="146.4" width="2" height="1.8" fill="#fff" fill-opacity="0.80"/>
<rect x="10" y="151.4" width="2" height="1.8" fill="#fff" fill-opacity="0.80"/>
<rect x="10" y="156.4" width="2" height="1.8" fill="#fff" fill-opacity="0.80"/>
<rect x="10" y="161.4" width="2" height="1.8" fill="#fff" fill-opacity="0.80"/>
<rect x="10" y="171.4" width="2" height="1.8" fill="#fff" fill-opacity="0.80"/>
<rect x="10" y="176.4" width="2" height="1.8" fill="#fff" fill-opacity="0.80"/>
<rect x="10" y="181.4" width="2" height="1.8" fill="#fff" fill-opacity="0.80"/>
<rect x="10" y="186.4" width="2" height="1.8" fill="#fff" fill-opacity="0.80"/>
<rect x="10" y="191.4" width="2" height="1.8" fill="#fff" fill-opacity="0.80"/>
<rect x="10" y="196.4" width="2" height="1.8" fill="#fff" fill-opacity="0.80"/>
<rect x="10" y="201.4" width="2" height="1.8" fill="#fff" fill-opacity="0.80"/>
<rect x="10" y="206.4" width="2" height="1.8" fill="#fff" fill-opacity="0.80"/>
<rect x="10" y="211.4" width="2" height="1.8" fill="#fff" fill-opacity="0.80"/>
<rect x="10" y="221.4" width="2" height="1.8" fill="#fff" fill-opacity="0.80"/>
<rect x="10" y="226.4" width="2" height="1.8" fill="#fff" fill-opacity="0.80"/>
<rect x="10" y="231.4" width="2" height="1.8" fill="#fff" fill-opacity="0.80"/>
<rect x="10" y="236.4" width="2" height="1.8" fill="#fff" fill-opacity="0.80"/>
<rect x="10" y="241.4" width="2" height="1.8" fill="#fff" fill-opacity="0.80"/>
<rect x="10" y="246.4" width="2" height="1.8" fill="#fff" fill-opacity="0.80"/>
<rect x="10" y="251.4" width="2" height="1.8" fill="#fff" fill-opacity="0.80"/>
<rect x="10" y="256.4" width="2" height="1.8" fill="#fff" fill-opacity="0.80"/>
<rect x="10" y="261.4" width="2" height="1.8" fill="#fff" fill-opacity="0.80"/>
<rect x="10" y="271.4" width="2" height="1.8" fill="#fff" fill-opacity="0.80"/>
<rect x="10" y="276.4" width="2" height="1.8" fill="#fff" fill-opacity="0.80"/>
<rect x="10" y="281.4" width="2" height="1.8" fill="#fff" fill-opacity="0.80"/>
<rect x="10" y="286.4" width="2" height="1.8" fill="#fff" fill-opacity="0.80"/>
<rect x="10" y="291.4" width="2" height="1.8" fill="#fff" fill-opacity="0.80"/>
<rect x="10" y="296.4" width="2" height="1.8" fill="#fff" fill-opacity="0.80"/>
<rect x="10" y="301.4" width="2" height="1.8" fill="#fff" fill-opacity="0.80"/>
<rect x="10" y="306.4" width="2" height="1.8" fill="#fff" fill-opacity="0.80"/>
<rect x="10" y="311.4" width="2" height="1.8" fill="#fff" fill-opacity="0.80"/>
<rect x="10" y="321.4" width="2" height="1.8" fill="#fff" fill-opacity="0.80"/>
<rect x="10" y="326.4" width="2" height="1.8" fill="#fff" fill-opacity="0.80"/>
<rect x="10" y="331.4" width="2" height="1.8" fill="#fff" fill-opacity="0.80"/>
<rect x="10" y="336.4" width="2" height="1.8" fill="#fff" fill-opacity="0.80"/>
<rect x="10" y="341.4" width="2" height="1.8" fill="#fff" fill-opacity="0.80"/>
<rect x="10" y="346.4" width="2" height="1.8" fill="#fff" fill-opacity="0.80"/>
<rect x="10" y="351.4" width="2" height="1.8" fill="#fff" fill-opacity="0.80"/>
<rect x="10" y="356.4" width="2" height="1.8" fill="#fff" fill-opacity="0.80"/>
<rect x="10" y="361.4" width="2" height="1.8" fill="#fff" fill-opacity="0.80"/>
<rect x="10" y="371.4" width="2" height="1.8" fill="#fff" fill-opacity="0.80"/>
<rect x="10" y="376.4" width="2" height="1.8" fill="#fff" fill-opacity="0.80"/>
<rect x="10" y="381.4" width="2" height="1.8" fill="#fff" fill-opacity="0.80"/>
<rect x="10" y="386.4" width="2" height="1.8" fill="#fff" fill-opacity="0.80"/>
<rect x="10" y="391.4" width="2" height="1.8" fill="#fff" fill-opacity="0.80"/>
<rect x="10" y="396.4" width="2" height="1.8" fill="#fff" fill-opacity="0.80"/>
<rect x="10" y="401.4" width="2" height="1.8" fill="#fff" fill-opacity="0.80"/>
<rect x="10" y="406.4" width="2" height="1.8" fill="#fff" fill-opacity="0.80"/>
<rect x="10" y="411.4" width="2" height="1.8" fill="#fff" fill-opacity="0.80"/>
<rect x="10" y="421.4" width="2" height="1.8" fill="#fff" fill-opacity="0.80"/>
<rect x="10" y="426.4" width="2" height="1.8" fill="#fff" fill-opacity="0.80"/>
<rect x="10" y="431.4" width="2" height="1.8" fill="#fff" fill-opacity="0.80"/>
<rect x="10" y="436.4" width="2" height="1.8" fill="#fff" fill-opacity="0.80"/>
<rect x="10" y="441.4" width="2" height="1.8" fill="#fff" fill-opacity="0.80"/>
<rect x="10" y="446.4" width="2" height="1.8" fill="#fff" fill-opacity="0.80"/>
<rect x="10" y="451.4" width="2" height="1.8" fill="#fff" fill-opacity="0.80"/>
<rect x="10" y="456.4" width="2" height="1.8" fill="#fff" fill-opacity="0.80"/>
<rect x="10" y="461.4" width="2" height="1.8" fill="#fff" fill-opacity="0.80"/>
<rect x="10" y="471.4" width="2" height="1.8" fill="#fff" fill-opacity="0.80"/>
<rect x="10" y="476.4" width="2" height="1.8" fill="#fff" fill-opacity="0.80"/>
<rect x="10" y="481.4" width="2" height="1.8" fill="#fff" fill-opacity="0.80"/>
<rect x="10" y="486.4" width="2" height="1.8" fill="#fff" fill-opacity="0.80"/>
<rect x="10" y="491.4" width="2" height="1.8" fill="#fff" fill-opacity="0.80"/>
<rect x="10" y="496.4" width="2" height="1.8" fill="#fff" fill-opacity="0.80"/>
<rect x="10" y="501.4" width="2" height="1.8" fill="#fff" fill-opacity="0.80"/>
<rect x="10" y="506.4" width="2" height="1.8" fill="#fff" fill-opacity="0.80"/>
<rect x="10" y="511.4" width="2" height="1.8" fill="#fff" fill-opacity="0.80"/>
<rect x="10" y="521.4" width="2" height="1.8" fill="#fff" fill-opacity="0.80"/>
<rect x="10" y="526.4" width="2" height="1.8" fill="#fff" fill-opacity="0.80"/>
<rect x="10" y="531.4" width="2" height="1.8" fill="#fff" fill-opacity="0.80"/>
<rect x="10" y="536.4" width="2" height="1.8" fill="#fff" fill-opacity="0.80"/>
<rect x="10" y="541.4" width="2" height="1.8" fill="#fff" fill-opacity="0.80"/>
<rect x="10" y="546.4" width="2" height="1.8" fill="#fff" fill-opacity="0.80"/>
<rect x="10" y="551.4" width="2" height="1.8" fill="#fff" fill-opacity="0.80"/>
<rect x="10" y="556.4" width="2" height="1.8" fill="#fff" fill-opacity="0.80"/>
<rect x="10" y="561.4" width="2" height="1.8" fill="#fff" fill-opacity="0.80"/>
<rect x="10" y="571.4" width="2" height="1.8" fill="#fff" fill-opacity="0.80"/>
<rect x="10" y="576.4" width="2" height="1.8" fill="#fff" fill-opacity="0.80"/>
<rect x="10" y="581.4" width="2" height="1.8" fill="#fff" fill-opacity="0.80"/>
<rect x="10" y="586.4" width="2" height="1.8" fill="#fff" fill-opacity="0.80"/>
<rect x="10" y="591.4" width="2" height="1.8" fill="#fff" fill-opacity="0.80"/>
<rect x="10" y="596.4" width="2" height="1.8" fill="#fff" fill-opacity="0.80"/>
<rect x="10" y="601.4" width="2" height="1.8" fill="#fff" fill-opacity="0.80"/>
<rect x="10" y="606.4" width="2" height="1.8" fill="#fff" fill-opacity="0.80"/>
<rect x="10" y="611.4" width="2" height="1.8" fill="#fff" fill-opacity="0.80"/>
<rect x="10" y="621.4" width="2" height="1.8" fill="#fff" fill-opacity="0.80"/>
<rect x="10" y="626.4" width="2" height="1.8" fill="#fff" fill-opacity="0.80"/>
<rect x="10" y="631.4" width="2" height="1.8" fill="#fff" fill-opacity="0.80"/>
<rect x="10" y="636.4" width="2" height="1.8" fill="#fff" fill-opacity="0.80"/>
<rect x="10" y="641.4" width="2" height="1.8" fill="#fff" fill-opacity="0.80"/>
<rect x="10" y="646.4" width="2" height="1.8" fill="#fff" fill-opacity="0.80"/>
<rect x="10" y="651.4" width="2" height="1.8" fill="#fff" fill-opacity="0.80"/>
<rect x="10" y="656.4" width="2" height="1.8" fill="#fff" fill-opacity="0.80"/>
<rect x="10" y="661.4" width="2" height="1.8" fill="#fff" fill-opacity="0.80"/>
<rect x="10" y="671.4" width="2" height="1.8" fill="#fff" fill-opacity="0.80"/>
<rect x="10" y="676.4" width="2" height="1.8" fill="#fff" fill-opacity="0.80"/>
<rect x="10" y="681.4" width="2" height="1.8" fill="#fff" fill-opacity="0.80"/>
<rect x="10" y="686.4" width="2" height="1.8" fill="#fff" fill-opacity="0.80"/>
<rect x="10" y="691.4" width="2" height="1.8" fill="#fff" fill-opacity="0.80"/>
<rect x="10" y="696.4" width="2" height="1.8" fill="#fff" fill-opacity="0.80"/>
<rect x="10" y="701.4" width="2" height="1.8" fill="#fff" fill-opacity="0.78"/>
<rect x="10" y="706.4" width="2" height="1.8" fill="#fff" fill-opacity="0.74"/>
<rect x="10" y="711.4" width="2" height="1.8" fill="#fff" fill-opacity="0.70"/>
<rect x="10" y="721.4" width="2" height="1.8" fill="#fff" fill-opacity="0.62"/>
<rect x="10" y="726.4" width="2" height="1.8" fill="#fff" fill-opacity="0.58"/>
<rect x="10" y="731.4" width="2" height="1.8" fill="#fff" fill-opacity="0.54"/>
<rect x="10" y="736.4" width="2" height="1.8" fill="#fff" fill-opacity="0.50"/>
<rect x="10" y="741.4" width="2" height="1.8" fill="#fff" fill-opacity="0.46"/>
<rect x="10" y="746.4" width="2" height="1.8" fill="#fff" fill-opacity="0.42"/>
<rect x="10" y="751.4" width="2" height="1.8" fill="#fff" fill-opacity="0.38"/>
<rect x="10" y="756.4" width="2" height="1.8" fill="#fff" fill-opacity="0.34"/>
<rect x="10" y="761.4" width="2" height="1.8" fill="#fff" fill-opacity="0.30"/>
<rect x="10" y="771.4" width="2" height="1.8" fill="#fff" fill-opacity="0.22"/>
<rect x="10" y="776.4" width="2" height="1.8" fill="#fff" fill-opacity="0.18"/>
<rect x="10" y="781.4" width="2" height="1.8" fill="#fff" fill-opacity="0.14"/>
<rect x="10" y="786.4" width="2" height="1.8" fill="#fff" fill-opacity="0.10"/>
<rect x="10" y="791.4" width="2" height="1.8" fill="#fff" fill-opacity="0.06"/>
<rect x="10" y="796.4" width="2" height="1.8" fill="#fff" fill-opacity="0.02"/>
<rect x="10" y="66.3" width="6" height="2" fill="#fff" fill-opacity="0.45"/>
<rect x="10" y="116.3" width="6" height="2" fill="#fff" fill-opacity="0.85"/>
<rect x="10" y="166.3" width="6" height="2" fill="#fff" fill-opacity="0.85"/>
<rect x="10" y="216.3" width="6" height="2" fill="#fff" fill-opacity="0.85"/>
<rect x="10" y="266.3" width="6" height="2" fill="#fff" fill-opacity="0.85"/>
<rect x="10" y="316.3" width="6" height="2" fill="#fff" fill-opacity="0.85"/>
<rect x="10" y="366.3" width="6" height="2" fill="#fff" fill-opacity="0.85"/>
<rect x="10" y="416.3" width="6" height="2" fill="#fff" fill-opacity="0.85"/>
<rect x="10" y="466.3" width="6" height="2" fill="#fff" fill-opacity="0.85"/>
<rect x="10" y="516.3" width="6" height="2" fill="#fff" fill-opacity="0.85"/>
<rect x="10" y="566.3" width="6" height="2" fill="#fff" fill-opacity="0.85"/>
<rect x="10" y="616.3" width="6" height="2" fill="#fff" fill-opacity="0.85"/>
<rect x="10" y="666.3" width="6" height="2" fill="#fff" fill-opacity="0.85"/>
<rect x="10" y="716.3" width="6" height="2" fill="#fff" fill-opacity="0.85"/>
<rect x="10" y="766.3" width="6" height="2" fill="#fff" fill-opacity="0.25"/>
</svg>
<span class="" style="position:absolute;top:159.5px;height:14px;line-height:14px;font-size:11px;color:rgba(255,255,255,0.45);white-space:nowrap;letter-spacing:-0.117px;left:61.0px;">1500</span>
<span class="" style="position:absolute;top:259.5px;height:14px;line-height:14px;font-size:11px;color:rgba(255,255,255,0.8);white-space:nowrap;letter-spacing:-0.117px;left:61.0px;text-shadow:1px 1px 1px rgba(0,0,20,0.45);">1400</span>
<span class="" style="position:absolute;top:359.5px;height:14px;line-height:14px;font-size:11px;color:rgba(255,255,255,0.85);white-space:nowrap;letter-spacing:-0.117px;left:61.0px;text-shadow:1px 1px 1px rgba(0,0,20,0.45);">1300</span>
<span class="" style="position:absolute;top:459.5px;height:14px;line-height:14px;font-size:11px;color:rgba(255,255,255,0.85);white-space:nowrap;letter-spacing:-0.117px;left:61.0px;text-shadow:1px 1px 1px rgba(0,0,20,0.45);">1200</span>
<span class="" style="position:absolute;top:559.5px;height:14px;line-height:14px;font-size:11px;color:rgba(255,255,255,0.85);white-space:nowrap;letter-spacing:0.087px;left:61.0px;text-shadow:1px 1px 1px rgba(0,0,20,0.45);">1100</span>
<span class="" style="position:absolute;top:659.5px;height:14px;line-height:14px;font-size:11px;color:rgba(255,255,255,0.85);white-space:nowrap;letter-spacing:-0.117px;left:61.0px;text-shadow:1px 1px 1px rgba(0,0,20,0.45);">1000</span>
<span class="" style="position:absolute;top:759.5px;height:14px;line-height:14px;font-size:11px;color:rgba(255,255,255,0.8);white-space:nowrap;letter-spacing:-0.117px;left:61.0px;text-shadow:1px 1px 1px rgba(0,0,20,0.45);">900</span>
<span class="" style="position:absolute;top:859.0px;height:14px;line-height:14px;font-size:11px;color:rgba(255,255,255,0.22);white-space:nowrap;letter-spacing:-0.117px;left:61.0px;">800</span>
<span class="" style="position:absolute;top:866.8px;height:16px;line-height:16px;font-size:12px;color:#fff;white-space:nowrap;letter-spacing:-0.203px;left:46.5px;text-shadow:-1px 0 #000,1px 0 #000,0 -1px #000,0 1px #000,-1px -1px #000,1px 1px #000,-1px 1px #000,1px -1px #000;">Max 188</span>
<span class="" style="position:absolute;top:879.0px;height:16px;line-height:16px;font-size:12px;color:#fff;white-space:nowrap;letter-spacing:-0.003px;left:46.5px;text-shadow:-1px 0 #000,1px 0 #000,0 -1px #000,0 1px #000,-1px -1px #000,1px 1px #000,-1px 1px #000,1px -1px #000;">Min 36</span>
<svg style="position:absolute;left:12px;top:498px" width="12" height="14"><path d="M3.500 2.500l4 4.500-4 4.500" fill="none" stroke="#d5dbe6" stroke-width="1.200"/></svg><div style="position:absolute;left:1313.0px;top:279.0px;width:30.0px;height:30.0px;background:#5865f2;border-radius:9px;"></div>
<svg style="position:absolute;left:1320.8px;top:286.8px;color:#dcdce4;fill:#dcdce4;--bg:#5865f2;" width="14.5" height="14.5"><use href="#s-pie1"/></svg>
<div style="position:absolute;left:1313.0px;top:313.0px;width:30.0px;height:30.0px;background:#1e1f2b;border-radius:9px;"></div>
<svg style="position:absolute;left:1320.8px;top:320.8px;color:#d8d8da;fill:#d8d8da;--bg:#1e1f2b;" width="14.5" height="14.5"><use href="#s-pie2"/></svg>
<div style="position:absolute;left:1313.0px;top:347.0px;width:30.0px;height:30.0px;background:#1e1f2b;border-radius:9px;"></div>
<svg style="position:absolute;left:1320.8px;top:354.8px;color:#d8d8da;fill:#d8d8da;--bg:#1e1f2b;" width="14.5" height="14.5"><use href="#s-pie3"/></svg>
<div style="position:absolute;left:1313.0px;top:381.0px;width:30.0px;height:30.0px;background:#1e1f2b;border-radius:9px;"></div>
<svg style="position:absolute;left:1320.8px;top:388.8px;color:#d8d8da;fill:#d8d8da;--bg:#1e1f2b;" width="14.5" height="14.5"><use href="#s-fire"/></svg>
<div style="position:absolute;left:1313.0px;top:415.0px;width:30.0px;height:30.0px;background:#1e1f2b;border-radius:9px;"></div>
<svg style="position:absolute;left:1320.8px;top:422.8px;color:#d8d8da;fill:#d8d8da;--bg:#1e1f2b;" width="14.5" height="14.5"><use href="#s-mount"/></svg>
<div style="position:absolute;left:1313.0px;top:449.0px;width:30.0px;height:30.0px;background:#1e1f2b;border-radius:9px;"></div>
<svg style="position:absolute;left:1320.8px;top:456.8px;color:#d8d8da;fill:#d8d8da;--bg:#1e1f2b;" width="14.5" height="14.5"><use href="#i-island"/></svg>
<div style="position:absolute;left:1313.0px;top:483.0px;width:30.0px;height:30.0px;background:#1e1f2b;border-radius:9px;"></div>
<svg style="position:absolute;left:1320.8px;top:490.8px;color:#d8d8da;fill:#d8d8da;--bg:#1e1f2b;" width="14.5" height="14.5"><use href="#s-grid"/></svg>
<div style="position:absolute;left:1313.0px;top:536.0px;width:30.0px;height:30.0px;background:#5865f2;border-radius:9px;"></div>
<svg style="position:absolute;left:1320.8px;top:543.8px;color:#dcdce4;fill:#dcdce4;--bg:#5865f2;" width="14.5" height="14.5"><use href="#s-sun"/></svg>
<div style="position:absolute;left:1313.0px;top:570.0px;width:30.0px;height:30.0px;background:#1e1f2b;border-radius:9px;"></div>
<svg style="position:absolute;left:1320.8px;top:577.8px;color:#d8d8da;fill:#d8d8da;--bg:#1e1f2b;" width="14.5" height="14.5"><use href="#s-cloud"/></svg>
<div style="position:absolute;left:1313.0px;top:604.0px;width:30.0px;height:30.0px;background:#1e1f2b;border-radius:9px;"></div>
<svg style="position:absolute;left:1320.8px;top:611.8px;color:#d8d8da;fill:#d8d8da;--bg:#1e1f2b;" width="14.5" height="14.5"><use href="#s-water"/></svg>
<div style="position:absolute;left:1313.0px;top:657.0px;width:30.0px;height:30.0px;background:#5865f2;border-radius:9px;"></div>
<svg style="position:absolute;left:1320.8px;top:664.8px;color:#dcdce4;fill:#dcdce4;--bg:#5865f2;" width="14.5" height="14.5"><use href="#s-cogs"/></svg>
<div style="position:absolute;left:1313.0px;top:691.0px;width:30.0px;height:30.0px;background:#5865f2;border-radius:9px;"></div>
<svg style="position:absolute;left:1320.8px;top:698.8px;color:#dcdce4;fill:#dcdce4;--bg:#5865f2;" width="14.5" height="14.5"><use href="#i-eye"/></svg>
<div style="position:absolute;left:1313.0px;top:725.0px;width:30.0px;height:30.0px;background:#5865f2;border-radius:9px;"></div>
<svg style="position:absolute;left:1320.8px;top:732.8px;color:#dcdce4;fill:#dcdce4;--bg:#5865f2;" width="14.5" height="14.5"><use href="#i-filter"/></svg>
<div style="position:absolute;left:1313.0px;top:759.0px;width:30.0px;height:30.0px;background:#5865f2;border-radius:9px;"></div>
<svg style="position:absolute;left:1320.8px;top:766.8px;color:#dcdce4;fill:#dcdce4;--bg:#5865f2;" width="14.5" height="14.5"><use href="#i-layers"/></svg>
<div style="position:absolute;left:1313.0px;top:812.2px;width:30.0px;height:30.0px;background:#1e1f2b;border-radius:9px;"></div>
<svg style="position:absolute;left:1320.8px;top:820.0px;color:#d8d8da;fill:#d8d8da;--bg:#1e1f2b;" width="14.5" height="14.5"><use href="#s-disc"/></svg>
<div style="position:absolute;left:1313.0px;top:846.2px;width:30.0px;height:30.0px;background:#1e1f2b;border-radius:9px;"></div>
<svg style="position:absolute;left:1320.8px;top:854.0px;color:#d8d8da;fill:#d8d8da;--bg:#1e1f2b;" width="14.5" height="14.5"><use href="#s-img"/></svg>
<div style="position:absolute;left:1313.0px;top:880.2px;width:30.0px;height:30.0px;background:#1e1f2b;border-radius:9px;"></div>
<svg style="position:absolute;left:1320.8px;top:888.0px;color:#d8d8da;fill:#d8d8da;--bg:#1e1f2b;" width="14.5" height="14.5"><use href="#i-dl"/></svg>
<div style="position:absolute;left:1313.0px;top:914.2px;width:30.0px;height:30.0px;background:#1e1f2b;border-radius:9px;"></div>
<svg style="position:absolute;left:1320.8px;top:922.0px;color:#d8d8da;fill:#d8d8da;--bg:#1e1f2b;" width="14.5" height="14.5"><use href="#s-chart"/></svg><div style="position:absolute;left:1349.0px;top:20.0px;width:551.0px;height:968.0px;background:#1e1f2b;border-radius:5px;"></div>
<svg style="position:absolute;left:1353px;top:27px" width="42" height="42"><circle cx="20.500" cy="20.500" r="12.500" fill="#fff"/><path d="M4 36.500L37 4.500" stroke="#1e1f2b" stroke-width="4.500"/><path d="M4 36.500L37 4.500" stroke="#fff" stroke-width="1.500"/></svg>
<div style="position:absolute;left:1514.0px;top:30.0px;width:35.0px;height:35.0px;background:#343545;border-radius:18px;"></div>
<svg style="position:absolute;left:1520.8px;top:36.8px;color:#cfd0da;fill:#cfd0da;--bg:#343545;" width="21.5" height="21.5"><use href="#t-home"/></svg>
<div style="position:absolute;left:1557.0px;top:30.0px;width:35.0px;height:35.0px;background:#343545;border-radius:18px;"></div>
<svg style="position:absolute;left:1563.8px;top:36.8px;color:#cfd0da;fill:#cfd0da;--bg:#343545;" width="21.5" height="21.5"><use href="#t-file"/></svg>
<div style="position:absolute;left:1600.0px;top:30.0px;width:35.0px;height:35.0px;background:#343545;border-radius:18px;"></div>
<svg style="position:absolute;left:1606.8px;top:36.8px;color:#cfd0da;fill:#cfd0da;--bg:#343545;" width="21.5" height="21.5"><use href="#t-folder"/></svg>
<div style="position:absolute;left:1643.0px;top:30.0px;width:35.0px;height:35.0px;background:#343545;border-radius:18px;"></div>
<svg style="position:absolute;left:1649.8px;top:36.8px;color:#cfd0da;fill:#cfd0da;--bg:#343545;" width="21.5" height="21.5"><use href="#t-save"/></svg>
<div style="position:absolute;left:1686.0px;top:30.0px;width:35.0px;height:35.0px;background:#343545;border-radius:18px;"></div>
<svg style="position:absolute;left:1692.8px;top:36.8px;color:#cfd0da;fill:#cfd0da;--bg:#343545;" width="21.5" height="21.5"><use href="#t-saveplus"/></svg>
<div style="position:absolute;left:1729.0px;top:30.0px;width:35.0px;height:35.0px;background:#343545;border-radius:18px;"></div>
<svg style="position:absolute;left:1735.8px;top:36.8px;color:#cfd0da;fill:#cfd0da;--bg:#343545;" width="21.5" height="21.5"><use href="#t-saveedit"/></svg>
<div style="position:absolute;left:1772.0px;top:30.0px;width:35.0px;height:35.0px;background:#343545;border-radius:18px;"></div>
<svg style="position:absolute;left:1778.8px;top:36.8px;color:#cfd0da;fill:#cfd0da;--bg:#343545;" width="21.5" height="21.5"><use href="#t-sync"/></svg>
<div style="position:absolute;left:1815.0px;top:30.0px;width:35.0px;height:35.0px;background:#343545;border-radius:18px;"></div>
<svg style="position:absolute;left:1821.8px;top:36.8px;color:#cfd0da;fill:#cfd0da;--bg:#343545;" width="21.5" height="21.5"><use href="#t-camera"/></svg>
<div style="position:absolute;left:1858.0px;top:30.0px;width:35.0px;height:35.0px;background:#343545;border-radius:18px;"></div>
<svg style="position:absolute;left:1864.8px;top:36.8px;color:#cfd0da;fill:#cfd0da;--bg:#343545;" width="21.5" height="21.5"><use href="#t-chat"/></svg>
<div style="position:absolute;left:1356.0px;top:77.0px;width:265.0px;height:863.5px;background:#272834;border-radius:6px;"></div>
<div style="position:absolute;left:1628.0px;top:77.0px;width:265.5px;height:863.5px;background:#272834;border-radius:6px;"></div>
<div style="position:absolute;left:1356.0px;top:949.0px;width:537.5px;height:29.5px;background:#3e3f59;border-radius:5px;"></div>
<div style="position:absolute;left:1351.0px;top:915.0px;width:2.0px;height:2.0px;background:#777888;border-radius:1px;"></div>
<div style="position:absolute;left:1351.0px;top:922.0px;width:2.0px;height:2.0px;background:#777888;border-radius:1px;"></div>
<div style="position:absolute;left:1351.0px;top:929.0px;width:2.0px;height:2.0px;background:#777888;border-radius:1px;"></div>
<div style="position:absolute;left:1623.5px;top:915.0px;width:2.0px;height:2.0px;background:#777888;border-radius:1px;"></div>
<div style="position:absolute;left:1623.5px;top:922.0px;width:2.0px;height:2.0px;background:#777888;border-radius:1px;"></div>
<div style="position:absolute;left:1623.5px;top:929.0px;width:2.0px;height:2.0px;background:#777888;border-radius:1px;"></div>
<div style="position:absolute;left:1366.0px;top:85.0px;width:197.0px;height:19.5px;background:#1e1f2b;border-radius:3px;"></div>
<svg style="position:absolute;left:1373.8px;top:91.8px;color:#d0d1da;fill:#d0d1da;" width="8.5" height="8.5"><use href="#i-search"/></svg>
<span class="" style="position:absolute;top:89.9px;height:14px;line-height:14px;font-size:10.5px;color:#4b4d5f;white-space:nowrap;letter-spacing:-0.278px;left:1391.5px;">Search</span>
<div style="position:absolute;left:1572.6px;top:87.8px;width:16.4px;height:16.4px;background:#8c8c89;border-radius:9px;"></div>
<svg style="position:absolute;left:1575.5px;top:91.2px;color:#2c2d39;fill:#2c2d39;" width="10.5" height="10.5"><use href="#i-cd"/></svg>
<div style="position:absolute;left:1594.8px;top:87.8px;width:16.4px;height:16.4px;background:#8c8c89;border-radius:9px;"></div>
<svg style="position:absolute;left:1597.8px;top:91.2px;color:#2c2d39;fill:#2c2d39;" width="10.5" height="10.5"><use href="#i-cr"/></svg>
<div style="position:absolute;left:1366.0px;top:112.0px;width:245.0px;height:1.0px;background:#3a3c4d;border-radius:0px;"></div>
<svg style="position:absolute;left:1369.5px;top:117.0px;color:#b9bac6;fill:#b9bac6;" width="12.5" height="12.5"><use href="#i-cd"/></svg>
<svg style="position:absolute;left:1387.0px;top:116.5px;color:#b4b5c0;fill:#b4b5c0;" width="13" height="13"><use href="#i-mount"/></svg>
<span class="" style="position:absolute;top:115.8px;height:16px;line-height:16px;font-size:12px;color:#c7c9d4;white-space:nowrap;letter-spacing:-0.240px;left:1405.0px;">Terrain</span>
<div style="position:absolute;left:1366.0px;top:132.0px;width:245.0px;height:1.0px;background:#3a3c4d;border-radius:0px;"></div>
<svg style="position:absolute;left:1368.8px;top:135.8px;color:#c3c4ce;fill:#c3c4ce;" width="14.5" height="14.5"><use href="#i-eye"/></svg>
<svg style="position:absolute;left:1389.5px;top:137.1px;color:#b9bac6;fill:#b9bac6;" width="12.5" height="12.5"><use href="#i-cd"/></svg>
<svg style="position:absolute;left:1406.8px;top:137.0px;color:#b4b5c0;fill:#b4b5c0;" width="12" height="12"><use href="#i-island"/></svg>
<span class="" style="position:absolute;top:135.8px;height:16px;line-height:16px;font-size:12px;color:#c7c9d4;white-space:nowrap;letter-spacing:-0.335px;left:1423.3px;">Biomes</span>
<svg style="position:absolute;left:1577.8px;top:136.8px;color:#7f808e;fill:#7f808e;" width="12.5" height="12.5"><use href="#i-folder"/></svg>
<svg style="position:absolute;left:1595.7px;top:136.8px;color:#9091a0;fill:#9091a0;" width="12.5" height="12.5"><use href="#i-plus"/></svg>
<div style="position:absolute;left:1366.0px;top:152.0px;width:245.0px;height:1.0px;background:#3a3c4d;border-radius:0px;"></div>
<svg style="position:absolute;left:1368.8px;top:155.8px;color:#c3c4ce;fill:#c3c4ce;" width="14.5" height="14.5"><use href="#i-eye"/></svg>
<svg style="position:absolute;left:1407.5px;top:157.1px;color:#b9bac6;fill:#b9bac6;" width="12.5" height="12.5"><use href="#i-cd"/></svg>
<div style="position:absolute;left:1424.7px;top:156.0px;width:8.6px;height:13.5px;background:#22e61e;border-radius:3.5px;"></div>
<svg style="position:absolute;left:1441.2px;top:157.2px;color:#b4b5c0;fill:#b4b5c0;" width="11.5" height="11.5"><use href="#i-island"/></svg>
<span class="" style="position:absolute;top:155.8px;height:16px;line-height:16px;font-size:12px;color:#c7c9d4;white-space:nowrap;letter-spacing:-0.048px;left:1456.8px;">Global</span>
<svg style="position:absolute;left:1595.2px;top:156.2px;color:#9d9ea9;fill:#9d9ea9;" width="12.5" height="12.5"><use href="#i-layerplus"/></svg>
<div style="position:absolute;left:1366.0px;top:172.0px;width:245.0px;height:1.0px;background:#3a3c4d;border-radius:0px;"></div>
<svg style="position:absolute;left:1368.8px;top:175.8px;color:#c3c4ce;fill:#c3c4ce;" width="14.5" height="14.5"><use href="#i-eye"/></svg>
<svg style="position:absolute;left:1425.8px;top:177.1px;color:#b9bac6;fill:#b9bac6;" width="12.5" height="12.5"><use href="#i-cd"/></svg>
<svg style="position:absolute;left:1443.0px;top:177.0px;color:#b4b5c0;fill:#b4b5c0;" width="12" height="12"><use href="#i-filter"/></svg>
<span class="" style="position:absolute;top:175.8px;height:16px;line-height:16px;font-size:12px;color:#c7c9d4;white-space:nowrap;letter-spacing:-0.238px;left:1459.3px;">Filters</span>
<svg style="position:absolute;left:1577.8px;top:176.8px;color:#7f808e;fill:#7f808e;" width="12.5" height="12.5"><use href="#i-folder"/></svg>
<svg style="position:absolute;left:1595.7px;top:176.8px;color:#9091a0;fill:#9091a0;" width="12.5" height="12.5"><use href="#i-plus"/></svg>
<div style="position:absolute;left:1366.0px;top:193.0px;width:245.0px;height:19.5px;background:#3d3f5b;border-radius:1px;"></div>
<div style="position:absolute;left:1366.0px;top:192.0px;width:245.0px;height:1.0px;background:#3a3c4d;border-radius:0px;"></div>
<svg style="position:absolute;left:1368.8px;top:195.8px;color:#c3c4ce;fill:#c3c4ce;" width="14.5" height="14.5"><use href="#i-eye"/></svg>
<svg style="position:absolute;left:1443.5px;top:197.1px;color:#b9bac6;fill:#b9bac6;" width="12.5" height="12.5"><use href="#i-cr"/></svg>
<svg style="position:absolute;left:1461.0px;top:197.0px;color:#b4b5c0;fill:#b4b5c0;" width="12" height="12"><use href="#i-filter"/></svg>
<span class="" style="position:absolute;top:195.8px;height:16px;line-height:16px;font-size:12px;color:#c7c9d4;white-space:nowrap;letter-spacing:-0.231px;left:1477.0px;">Arid - Rocky Layers</span>
<svg style="position:absolute;left:1595.4px;top:196.5px;color:#8b8d9e;fill:#8b8d9e;" width="13" height="13"><use href="#i-sync"/></svg>
<div style="position:absolute;left:1366.0px;top:212.0px;width:245.0px;height:1.0px;background:#3a3c4d;border-radius:0px;"></div>
<svg style="position:absolute;left:1368.8px;top:215.8px;color:#c3c4ce;fill:#c3c4ce;" width="14.5" height="14.5"><use href="#i-eye"/></svg>
<svg style="position:absolute;left:1425.8px;top:217.1px;color:#b9bac6;fill:#b9bac6;" width="12.5" height="12.5"><use href="#i-cd"/></svg>
<svg style="position:absolute;left:1443.0px;top:217.0px;color:#b4b5c0;fill:#b4b5c0;" width="12" height="12"><use href="#i-mat"/></svg>
<span class="" style="position:absolute;top:215.8px;height:16px;line-height:16px;font-size:12px;color:#c7c9d4;white-space:nowrap;letter-spacing:-0.109px;left:1459.3px;">Materials</span>
<svg style="position:absolute;left:1577.8px;top:216.8px;color:#7f808e;fill:#7f808e;" width="12.5" height="12.5"><use href="#i-folder"/></svg>
<svg style="position:absolute;left:1595.7px;top:216.8px;color:#9091a0;fill:#9091a0;" width="12.5" height="12.5"><use href="#i-plus"/></svg>
<div style="position:absolute;left:1366.0px;top:232.0px;width:245.0px;height:1.0px;background:#3a3c4d;border-radius:0px;"></div>
<svg style="position:absolute;left:1368.8px;top:235.8px;color:#c3c4ce;fill:#c3c4ce;" width="14.5" height="14.5"><use href="#i-eye"/></svg>
<svg style="position:absolute;left:1443.5px;top:237.1px;color:#b9bac6;fill:#b9bac6;" width="12.5" height="12.5"><use href="#i-cr"/></svg>
<svg style="position:absolute;left:1461.0px;top:237.0px;color:#b4b5c0;fill:#b4b5c0;" width="12" height="12"><use href="#i-mat"/></svg>
<span class="" style="position:absolute;top:235.8px;height:16px;line-height:16px;font-size:12px;color:#c7c9d4;white-space:nowrap;letter-spacing:0.065px;left:1477.0px;">Color</span>
<svg style="position:absolute;left:1595.4px;top:236.5px;color:#8b8d9e;fill:#8b8d9e;" width="13" height="13"><use href="#i-sync"/></svg>
<div style="position:absolute;left:1540.0px;top:235.8px;width:50.0px;height:14.0px;background:#ffffff;border-radius:2.5px;"></div>
<div style="position:absolute;left:1366.0px;top:252.0px;width:245.0px;height:1.0px;background:#3a3c4d;border-radius:0px;"></div>
<svg style="position:absolute;left:1368.8px;top:255.8px;color:#c3c4ce;fill:#c3c4ce;" width="14.5" height="14.5"><use href="#i-eye"/></svg>
<svg style="position:absolute;left:1406.8px;top:256.8px;color:#b4b5c0;fill:#b4b5c0;" width="12.5" height="12.5"><use href="#i-layers"/></svg>
<span class="" style="position:absolute;top:255.8px;height:16px;line-height:16px;font-size:12px;color:#c7c9d4;white-space:nowrap;letter-spacing:-0.322px;left:1423.2px;">Biome Layers</span>
<svg style="position:absolute;left:1577.8px;top:256.8px;color:#7f808e;fill:#7f808e;" width="12.5" height="12.5"><use href="#i-folder"/></svg>
<svg style="position:absolute;left:1595.7px;top:256.8px;color:#9091a0;fill:#9091a0;" width="12.5" height="12.5"><use href="#i-plus"/></svg>
<div style="position:absolute;left:1366.0px;top:272.0px;width:245.0px;height:1.0px;background:#3a3c4d;border-radius:0px;"></div>
<svg style="position:absolute;left:1368.8px;top:275.8px;color:#c3c4ce;fill:#c3c4ce;" width="14.5" height="14.5"><use href="#i-eye"/></svg>
<svg style="position:absolute;left:1406.8px;top:276.8px;color:#b4b5c0;fill:#b4b5c0;" width="12.5" height="12.5"><use href="#i-shape"/></svg>
<span class="" style="position:absolute;top:275.8px;height:16px;line-height:16px;font-size:12px;color:#c7c9d4;white-space:nowrap;letter-spacing:-0.454px;left:1423.2px;">Shape Layers</span>
<svg style="position:absolute;left:1577.8px;top:276.8px;color:#7f808e;fill:#7f808e;" width="12.5" height="12.5"><use href="#i-folder"/></svg>
<svg style="position:absolute;left:1595.7px;top:276.8px;color:#9091a0;fill:#9091a0;" width="12.5" height="12.5"><use href="#i-plus"/></svg>
<div style="position:absolute;left:1366.0px;top:292.0px;width:245.0px;height:1.0px;background:#3a3c4d;border-radius:0px;"></div>
<svg style="position:absolute;left:1368.8px;top:295.8px;color:#c3c4ce;fill:#c3c4ce;" width="14.5" height="14.5"><use href="#i-eye"/></svg>
<svg style="position:absolute;left:1407.0px;top:297.0px;color:#b4b5c0;fill:#b4b5c0;" width="12" height="12"><use href="#i-brush"/></svg>
<span class="" style="position:absolute;top:295.8px;height:16px;line-height:16px;font-size:12px;color:#c7c9d4;white-space:nowrap;letter-spacing:-0.392px;left:1423.2px;">Mask Layers</span>
<svg style="position:absolute;left:1577.8px;top:296.8px;color:#7f808e;fill:#7f808e;" width="12.5" height="12.5"><use href="#i-folder"/></svg>
<svg style="position:absolute;left:1595.7px;top:296.8px;color:#9091a0;fill:#9091a0;" width="12.5" height="12.5"><use href="#i-plus"/></svg>
<div style="position:absolute;left:1366.0px;top:312.0px;width:245.0px;height:1.0px;background:#3a3c4d;border-radius:0px;"></div>
<svg style="position:absolute;left:1368.8px;top:315.8px;color:#c3c4ce;fill:#c3c4ce;" width="14.5" height="14.5"><use href="#i-eye"/></svg>
<svg style="position:absolute;left:1407.2px;top:317.2px;color:#b4b5c0;fill:#b4b5c0;" width="11.5" height="11.5"><use href="#i-sim"/></svg>
<span class="" style="position:absolute;top:315.8px;height:16px;line-height:16px;font-size:12px;color:#c7c9d4;white-space:nowrap;letter-spacing:-0.198px;left:1423.2px;">Simulation Layers</span>
<svg style="position:absolute;left:1577.8px;top:316.8px;color:#7f808e;fill:#7f808e;" width="12.5" height="12.5"><use href="#i-folder"/></svg>
<svg style="position:absolute;left:1595.7px;top:316.8px;color:#9091a0;fill:#9091a0;" width="12.5" height="12.5"><use href="#i-plus"/></svg>
<div style="position:absolute;left:1366.0px;top:332.0px;width:245.0px;height:1.0px;background:#3a3c4d;border-radius:0px;"></div>
<svg style="position:absolute;left:1369.5px;top:337.1px;color:#b9bac6;fill:#b9bac6;" width="12.5" height="12.5"><use href="#i-cr"/></svg>
<svg style="position:absolute;left:1387.0px;top:336.5px;color:#b4b5c0;fill:#b4b5c0;" width="13" height="13"><use href="#i-video"/></svg>
<span class="" style="position:absolute;top:335.8px;height:16px;line-height:16px;font-size:12px;color:#c7c9d4;white-space:nowrap;letter-spacing:-0.605px;left:1405.0px;">Scene</span>
<div style="position:absolute;left:1366.0px;top:352.0px;width:245.0px;height:1.0px;background:#3a3c4d;border-radius:0px;"></div>
<svg style="position:absolute;left:1387.5px;top:357.0px;color:#b4b5c0;fill:#b4b5c0;" width="12" height="12"><use href="#i-dl"/></svg>
<span class="" style="position:absolute;top:355.8px;height:16px;line-height:16px;font-size:12px;color:#c7c9d4;white-space:nowrap;letter-spacing:-0.180px;left:1405.0px;">Export</span>
<svg style="position:absolute;left:1595.7px;top:356.8px;color:#9091a0;fill:#9091a0;" width="12.5" height="12.5"><use href="#i-plus"/></svg>
<div style="position:absolute;left:1366.0px;top:372.0px;width:245.0px;height:1.0px;background:#3a3c4d;border-radius:0px;"></div>
<svg style="position:absolute;left:1369.5px;top:377.1px;color:#b9bac6;fill:#b9bac6;" width="12.5" height="12.5"><use href="#i-cr"/></svg>
<svg style="position:absolute;left:1387.0px;top:376.5px;color:#b4b5c0;fill:#b4b5c0;" width="13" height="13"><use href="#i-star"/></svg>
<span class="" style="position:absolute;top:375.8px;height:16px;line-height:16px;font-size:12px;color:#c7c9d4;white-space:nowrap;letter-spacing:-0.454px;left:1405.0px;">Presets</span>
<div style="position:absolute;left:1366.0px;top:392.0px;width:245.0px;height:1.0px;background:#3a3c4d;border-radius:0px;"></div>
<svg style="position:absolute;left:1369.5px;top:397.1px;color:#b9bac6;fill:#b9bac6;" width="12.5" height="12.5"><use href="#i-cr"/></svg>
<svg style="position:absolute;left:1387.2px;top:396.8px;color:#b4b5c0;fill:#b4b5c0;" width="12.5" height="12.5"><use href="#i-gear"/></svg>
<span class="" style="position:absolute;top:395.8px;height:16px;line-height:16px;font-size:12px;color:#c7c9d4;white-space:nowrap;letter-spacing:0.064px;left:1405.0px;">Options</span>
<div style="position:absolute;left:1366.0px;top:412.0px;width:245.0px;height:1.0px;background:#3a3c4d;border-radius:0px;"></div>
<svg style="position:absolute;left:1638.0px;top:90.0px;color:#d5d6de;fill:#d5d6de;" width="14" height="12.5"><use href="#i-filter"/></svg>
<span class="" style="position:absolute;top:88.0px;height:16px;line-height:16px;font-size:12px;color:#d2d3dc;white-space:nowrap;letter-spacing:-0.174px;left:1658.0px;">Arid - Rocky Layers Settings</span>
<div style="position:absolute;left:1867.0px;top:88.0px;width:16.0px;height:16.0px;background:#8a8a86;border-radius:8px;"></div>
<svg style="position:absolute;left:1867.5px;top:88.5px;color:#2a2b36;fill:#2a2b36;" width="15" height="15"><use href="#i-info"/></svg>
<div style="position:absolute;left:1638.0px;top:110.0px;width:245.0px;height:1.7px;background:#3b3d4f;border-radius:0px;"></div>
<svg style="position:absolute;left:1638.0px;top:138.2px;color:#b9bac6;fill:#b9bac6;" width="9.5" height="9.5"><use href="#i-cd"/></svg>
<span class="" style="position:absolute;top:131.1px;height:21px;line-height:21px;font-size:16px;color:#ffffff;white-space:nowrap;font-weight:bold;letter-spacing:-0.531px;left:1657.5px;">Presets</span>
<div style="position:absolute;left:1638.0px;top:171.0px;width:112.0px;height:36.0px;background:#20212d;border-radius:5px;border-radius:5px 0 0 5px;"></div>
<div style="position:absolute;left:1753.2px;top:171.0px;width:129.7px;height:36.0px;background:#20212d;border-radius:5px;border-radius:0 5px 5px 0;"></div>
<span class="" style="position:absolute;top:184.0px;height:14px;line-height:14px;font-size:11px;color:#e6e7ee;white-space:nowrap;letter-spacing:-0.274px;left:1645.3px;">Load Preset</span>
<span class="" style="position:absolute;top:184.0px;height:14px;line-height:14px;font-size:11px;color:#e6e7ee;white-space:nowrap;letter-spacing:-0.304px;left:1761.8px;">Select...</span>
<svg style="position:absolute;left:1859.2px;top:185.5px;color:#c7c9d4;fill:#c7c9d4;" width="11" height="11"><use href="#i-cd"/></svg>
<div style="position:absolute;left:1638.0px;top:238.8px;width:245.0px;height:1.3px;background:#383a4b;border-radius:0px;"></div>
<svg style="position:absolute;left:1638.0px;top:267.2px;color:#b9bac6;fill:#b9bac6;" width="9.5" height="9.5"><use href="#i-cd"/></svg>
<span class="" style="position:absolute;top:260.3px;height:21px;line-height:21px;font-size:16px;color:#ffffff;white-space:nowrap;font-weight:bold;letter-spacing:-0.182px;left:1657.5px;">Level Step Strengths</span>
<div style="position:absolute;left:1638.0px;top:299.3px;width:245.0px;height:139.6px;background:#20212d;border-radius:6px;"></div>
<div style="position:absolute;left:1645.7px;top:316.1px;width:229.0px;height:1.0px;background:#44465a;border-radius:0px;"></div>
<div style="position:absolute;left:1645.7px;top:338.5px;width:229.0px;height:1.0px;background:#44465a;border-radius:0px;"></div>
<div style="position:absolute;left:1645.7px;top:361.0px;width:229.0px;height:1.0px;background:#44465a;border-radius:0px;"></div>
<div style="position:absolute;left:1645.7px;top:383.7px;width:229.0px;height:1.0px;background:#44465a;border-radius:0px;"></div>
<div style="position:absolute;left:1645.7px;top:405.7px;width:229.0px;height:1.0px;background:#4c4e60;border-radius:0px;"></div>
<div style="position:absolute;left:1648.7px;top:397.5px;width:13.4px;height:8.3px;background:#8b8b88;border-radius:0px;border-radius:4px 4px 0 0;"></div>
<span class="" style="position:absolute;top:411.8px;height:12px;line-height:12px;font-size:9px;color:#9fa0ac;white-space:nowrap;left:1652.9px;">1</span>
<svg style="position:absolute;left:1650.4px;top:423.9px;color:#a5a6b1;fill:#a5a6b1;" width="10" height="10"><use href="#i-eye"/></svg>
<div style="position:absolute;left:1667.8px;top:397.5px;width:13.4px;height:8.3px;background:#8b8b88;border-radius:0px;border-radius:4px 4px 0 0;"></div>
<span class="" style="position:absolute;top:411.8px;height:12px;line-height:12px;font-size:9px;color:#9fa0ac;white-space:nowrap;left:1672.0px;">2</span>
<svg style="position:absolute;left:1669.5px;top:423.9px;color:#a5a6b1;fill:#a5a6b1;" width="10" height="10"><use href="#i-eye"/></svg>
<div style="position:absolute;left:1686.9px;top:397.5px;width:13.4px;height:8.3px;background:#8b8b88;border-radius:0px;border-radius:4px 4px 0 0;"></div>
<span class="" style="position:absolute;top:411.8px;height:12px;line-height:12px;font-size:9px;color:#9fa0ac;white-space:nowrap;left:1691.1px;">3</span>
<svg style="position:absolute;left:1688.6px;top:423.9px;color:#a5a6b1;fill:#a5a6b1;" width="10" height="10"><use href="#i-eye"/></svg>
<div style="position:absolute;left:1706.0px;top:397.5px;width:13.4px;height:8.3px;background:#8b8b88;border-radius:0px;border-radius:4px 4px 0 0;"></div>
<span class="" style="position:absolute;top:411.8px;height:12px;line-height:12px;font-size:9px;color:#9fa0ac;white-space:nowrap;left:1710.2px;">4</span>
<svg style="position:absolute;left:1707.7px;top:423.9px;color:#a5a6b1;fill:#a5a6b1;" width="10" height="10"><use href="#i-eye"/></svg>
<div style="position:absolute;left:1725.1px;top:397.5px;width:13.4px;height:8.3px;background:#8b8b88;border-radius:0px;border-radius:4px 4px 0 0;"></div>
<span class="" style="position:absolute;top:411.8px;height:12px;line-height:12px;font-size:9px;color:#9fa0ac;white-space:nowrap;left:1729.3px;">5</span>
<svg style="position:absolute;left:1726.8px;top:423.9px;color:#a5a6b1;fill:#a5a6b1;" width="10" height="10"><use href="#i-eye"/></svg>
<div style="position:absolute;left:1744.2px;top:314.0px;width:13.4px;height:92.2px;background:#3d3f5b;border-radius:0px;"></div>
<div style="position:absolute;left:1744.2px;top:306.3px;width:13.4px;height:8.3px;background:#8b8b88;border-radius:0px;border-radius:4px 4px 0 0;"></div>
<span class="" style="position:absolute;top:411.8px;height:12px;line-height:12px;font-size:9px;color:#9fa0ac;white-space:nowrap;left:1748.4px;">6</span>
<svg style="position:absolute;left:1745.9px;top:423.9px;color:#a5a6b1;fill:#a5a6b1;" width="10" height="10"><use href="#i-eye"/></svg>
<div style="position:absolute;left:1763.3px;top:314.0px;width:13.4px;height:92.2px;background:#3d3f5b;border-radius:0px;"></div>
<div style="position:absolute;left:1763.3px;top:306.3px;width:13.4px;height:8.3px;background:#8b8b88;border-radius:0px;border-radius:4px 4px 0 0;"></div>
<span class="" style="position:absolute;top:411.8px;height:12px;line-height:12px;font-size:9px;color:#9fa0ac;white-space:nowrap;left:1767.5px;">7</span>
<svg style="position:absolute;left:1765.0px;top:423.9px;color:#a5a6b1;fill:#a5a6b1;" width="10" height="10"><use href="#i-eye"/></svg>
<div style="position:absolute;left:1782.4px;top:314.0px;width:13.4px;height:92.2px;background:#3d3f5b;border-radius:0px;"></div>
<div style="position:absolute;left:1782.4px;top:306.3px;width:13.4px;height:8.3px;background:#8b8b88;border-radius:0px;border-radius:4px 4px 0 0;"></div>
<span class="" style="position:absolute;top:411.8px;height:12px;line-height:12px;font-size:9px;color:#9fa0ac;white-space:nowrap;left:1786.6px;">8</span>
<svg style="position:absolute;left:1784.1px;top:423.9px;color:#a5a6b1;fill:#a5a6b1;" width="10" height="10"><use href="#i-eye"/></svg>
<div style="position:absolute;left:1801.5px;top:314.0px;width:13.4px;height:92.2px;background:#3d3f5b;border-radius:0px;"></div>
<div style="position:absolute;left:1801.5px;top:306.3px;width:13.4px;height:8.3px;background:#8b8b88;border-radius:0px;border-radius:4px 4px 0 0;"></div>
<span class="" style="position:absolute;top:411.8px;height:12px;line-height:12px;font-size:9px;color:#9fa0ac;white-space:nowrap;left:1805.7px;">9</span>
<svg style="position:absolute;left:1803.2px;top:423.9px;color:#a5a6b1;fill:#a5a6b1;" width="10" height="10"><use href="#i-eye"/></svg>
<div style="position:absolute;left:1820.6px;top:314.0px;width:13.4px;height:92.2px;background:#3d3f5b;border-radius:0px;"></div>
<div style="position:absolute;left:1820.6px;top:306.3px;width:13.4px;height:8.3px;background:#8b8b88;border-radius:0px;border-radius:4px 4px 0 0;"></div>
<span class="" style="position:absolute;top:411.8px;height:12px;line-height:12px;font-size:9px;color:#9fa0ac;white-space:nowrap;left:1822.3px;">10</span>
<svg style="position:absolute;left:1822.3px;top:423.9px;color:#a5a6b1;fill:#a5a6b1;" width="10" height="10"><use href="#i-eye"/></svg>
<div style="position:absolute;left:1839.7px;top:314.0px;width:13.4px;height:92.2px;background:#3d3f5b;border-radius:0px;"></div>
<div style="position:absolute;left:1839.7px;top:306.3px;width:13.4px;height:8.3px;background:#8b8b88;border-radius:0px;border-radius:4px 4px 0 0;"></div>
<span class="" style="position:absolute;top:411.8px;height:12px;line-height:12px;font-size:9px;color:#9fa0ac;white-space:nowrap;left:1841.7px;">11</span>
<svg style="position:absolute;left:1841.4px;top:423.9px;color:#a5a6b1;fill:#a5a6b1;" width="10" height="10"><use href="#i-eye"/></svg>
<div style="position:absolute;left:1858.8px;top:314.0px;width:13.4px;height:92.2px;background:#3d3f5b;border-radius:0px;"></div>
<div style="position:absolute;left:1858.8px;top:306.3px;width:13.4px;height:8.3px;background:#8b8b88;border-radius:0px;border-radius:4px 4px 0 0;"></div>
<span class="" style="position:absolute;top:411.8px;height:12px;line-height:12px;font-size:9px;color:#9fa0ac;white-space:nowrap;left:1860.5px;">12</span>
<svg style="position:absolute;left:1860.5px;top:423.9px;color:#a5a6b1;fill:#a5a6b1;" width="10" height="10"><use href="#i-eye"/></svg>
<div style="position:absolute;left:1638.0px;top:469.6px;width:245.0px;height:1.3px;background:#383a4b;border-radius:0px;"></div>
<svg style="position:absolute;left:1638.0px;top:497.2px;color:#b9bac6;fill:#b9bac6;" width="9.5" height="9.5"><use href="#i-cd"/></svg>
<span class="" style="position:absolute;top:490.4px;height:21px;line-height:21px;font-size:16px;color:#ffffff;white-space:nowrap;font-weight:bold;letter-spacing:-0.293px;left:1657.2px;">Base Settings</span>
<div style="position:absolute;left:1638.0px;top:530.1px;width:245.0px;height:19.6px;background:#3d3f5b;border-radius:3.5px;"></div>
<div style="position:absolute;left:1640.6px;top:532.3px;width:240.1px;height:15.0px;background:#5865f2;border-radius:3px;"></div>
<span class="" style="position:absolute;top:533.3px;height:14px;line-height:14px;font-size:11px;color:#ffffff;white-space:nowrap;letter-spacing:-0.173px;left:1643.0px;">General Strength</span>
<span class="" style="position:absolute;top:534.6px;height:14px;line-height:14px;font-size:11px;color:#ffffff;white-space:nowrap;letter-spacing:-0.357px;right:45.2px;">100.00</span>
<div style="position:absolute;left:1638.0px;top:560.3px;width:111.6px;height:35.5px;background:#20212d;border-radius:5px;border-radius:5px 0 0 5px;"></div>
<div style="position:absolute;left:1753.0px;top:560.3px;width:130.0px;height:35.5px;background:#20212d;border-radius:5px;border-radius:0 5px 5px 0;"></div>
<span class="" style="position:absolute;top:572.4px;height:14px;line-height:14px;font-size:11px;color:#e6e7ee;white-space:nowrap;letter-spacing:0.031px;left:1644.8px;">Combine Operation</span>
<span class="" style="position:absolute;top:572.4px;height:14px;line-height:14px;font-size:11px;color:#e6e7ee;white-space:nowrap;letter-spacing:0.092px;left:1762.0px;">All</span>
<svg style="position:absolute;left:1859.3px;top:574.0px;color:#c7c9d4;fill:#c7c9d4;" width="11" height="11"><use href="#i-cd"/></svg>
<div style="position:absolute;left:1638.0px;top:607.9px;width:26.1px;height:26.0px;background:#3d3f5b;border-radius:5px;"></div>
<span class="" style="position:absolute;top:614.3px;height:14px;line-height:14px;font-size:11px;color:#e6e7ee;white-space:nowrap;letter-spacing:0.032px;left:1673.3px;">Invert</span>
<div style="position:absolute;left:1638.0px;top:644.1px;width:245.0px;height:19.6px;background:#3d3f5b;border-radius:3.5px;"></div>
<div style="position:absolute;left:1640.6px;top:646.3px;width:196.9px;height:15.0px;background:#5865f2;border-radius:3px;"></div>
<span class="" style="position:absolute;top:647.3px;height:14px;line-height:14px;font-size:11px;color:#ffffff;white-space:nowrap;letter-spacing:0.073px;left:1643.0px;">Angle</span>
<span class="" style="position:absolute;top:648.6px;height:14px;line-height:14px;font-size:11px;color:#ffffff;white-space:nowrap;letter-spacing:-0.227px;right:45.0px;">0.65</span>
<div style="position:absolute;left:1638.0px;top:673.8px;width:245.0px;height:19.6px;background:#3d3f5b;border-radius:3.5px;"></div>
<div style="position:absolute;left:1640.6px;top:676.0px;width:117.4px;height:15.0px;background:#5865f2;border-radius:3px;"></div>
<span class="" style="position:absolute;top:677.0px;height:14px;line-height:14px;font-size:11px;color:#ffffff;white-space:nowrap;letter-spacing:-0.101px;left:1643.0px;">Angle Change</span>
<span class="" style="position:absolute;top:678.3px;height:14px;line-height:14px;font-size:11px;color:#ffffff;white-space:nowrap;letter-spacing:-0.227px;right:45.0px;">0.00</span>
</div>
</body></html>
